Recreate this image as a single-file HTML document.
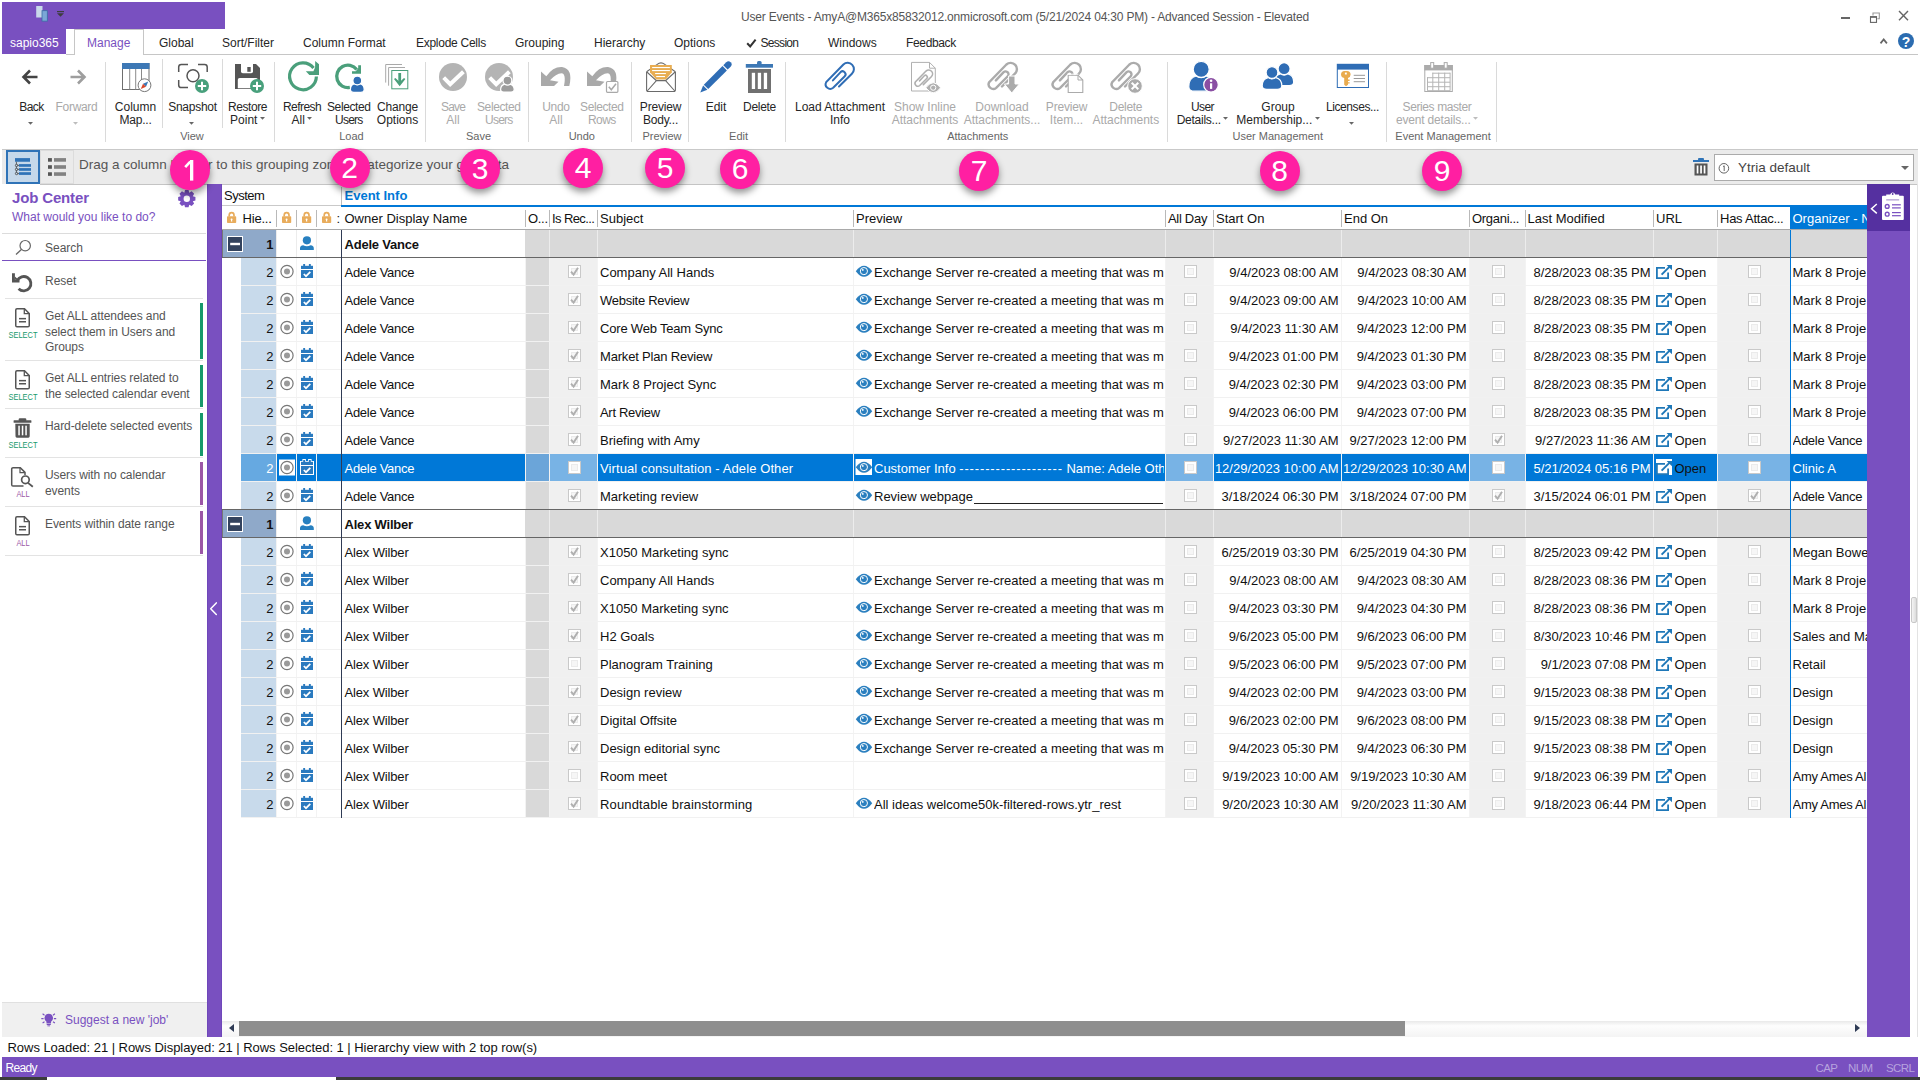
<!DOCTYPE html><html><head><meta charset="utf-8"><title>User Events</title><style>
*{margin:0;padding:0;box-sizing:border-box}
html,body{width:1920px;height:1080px;overflow:hidden;background:#fff}
body{font-family:"Liberation Sans",sans-serif;font-size:12px;color:#262626;position:relative}
.a{position:absolute}
.t{position:absolute;white-space:nowrap;line-height:16px;height:16px}
.c{text-align:center}
.r{text-align:right}
svg{position:absolute;overflow:visible}
.rb{font-size:12px;color:#262626}
.rd{font-size:12px;color:#a9a9a9}
.gl{font-size:11px;color:#666}
.vs{position:absolute;width:1px;background:#dadada}
.g{font-size:13px;color:#111}
.hd{font-size:13px;color:#111}
.cb{position:absolute;width:13px;height:13px;border:1px solid #c9c9c9;background:#fff}
.cb:after{content:"";position:absolute;left:2px;top:2px;width:5px;height:5px;border:1px solid #ebebeb;background:#f6f6f6}
.pc{position:absolute;width:40px;height:40px;border-radius:50%;background:#ff1fa2;color:#fff;font-size:30px;line-height:40px;text-align:center;box-shadow:0 4px 7px rgba(0,0,0,.42)}
.jt{font-size:12px;letter-spacing:-.08px;color:#555;line-height:15.5px;position:absolute;white-space:nowrap}
</style></head><body>
<div class="a" style="left:2px;top:2px;width:223px;height:27px;background:#7950c0;"></div>
<div class="a" style="left:2px;top:29px;width:64px;height:25px;background:#7950c0;"></div>
<div class="t c " style="left:625.0px;width:800px;top:9.0px;color:#555;font-size:12px;letter-spacing:-.187px">User Events - AmyA@M365x85832012.onmicrosoft.com (5/21/2024 04:30 PM) - Advanced Session - Elevated</div>
<div class="t" style="left:1898px;top:33.5px;width:16px;text-align:center;color:#fff;font-weight:bold;font-size:14px;z-index:5">?</div>
<div class="a" style="left:66px;top:54px;width:1852px;height:1px;background:#c6c6c6;"></div>
<div class="a" style="left:74px;top:29px;width:70px;height:26px;border:1px solid #c6c6c6;border-bottom:none;background:#fff"></div>
<div class="t " style="left:10px;top:35.0px;color:#fff;font-size:12px">sapio365</div>
<div class="t " style="left:87px;top:35.0px;color:#7950c0;font-size:12px;letter-spacing:0px">Manage</div>
<div class="t " style="left:159px;top:35.0px;color:#262626;font-size:12px;letter-spacing:0px">Global</div>
<div class="t " style="left:222px;top:35.0px;color:#262626;font-size:12px;letter-spacing:0px">Sort/Filter</div>
<div class="t " style="left:303px;top:35.0px;color:#262626;font-size:12px;letter-spacing:0px">Column Format</div>
<div class="t " style="left:416px;top:35.0px;color:#262626;font-size:12px;letter-spacing:-0.27px">Explode Cells</div>
<div class="t " style="left:515px;top:35.0px;color:#262626;font-size:12px;letter-spacing:0px">Grouping</div>
<div class="t " style="left:594px;top:35.0px;color:#262626;font-size:12px;letter-spacing:0px">Hierarchy</div>
<div class="t " style="left:674px;top:35.0px;color:#262626;font-size:12px;letter-spacing:0px">Options</div>
<div class="t " style="left:760.5px;top:35.0px;color:#262626;font-size:12px;letter-spacing:-0.7px">Session</div>
<div class="t " style="left:828px;top:35.0px;color:#262626;font-size:12px;letter-spacing:0px">Windows</div>
<div class="t " style="left:906px;top:35.0px;color:#262626;font-size:12px;letter-spacing:-0.35px">Feedback</div>
<div class="vs" style="left:105px;top:62px;height:80px"></div>
<div class="vs" style="left:274px;top:62px;height:80px"></div>
<div class="vs" style="left:425px;top:62px;height:80px"></div>
<div class="vs" style="left:528px;top:62px;height:80px"></div>
<div class="vs" style="left:631px;top:62px;height:80px"></div>
<div class="vs" style="left:688px;top:62px;height:80px"></div>
<div class="vs" style="left:785px;top:62px;height:80px"></div>
<div class="vs" style="left:1167px;top:62px;height:80px"></div>
<div class="vs" style="left:1386px;top:62px;height:80px"></div>
<div class="vs" style="left:1496px;top:62px;height:80px"></div>
<div class="vs" style="left:162px;top:59px;height:69px"></div>
<div class="vs" style="left:222px;top:59px;height:69px"></div>
<div class="a" style="left:2px;top:149px;width:1916px;height:1px;background:#c9c9c9;"></div>
<div class="t c rb" style="left:-68.5px;width:200px;top:98.5px;"><span style="letter-spacing:-0.55px">Back</span></div>
<svg style="left:27.7px;top:122px" width="5" height="3" viewBox="0 0 5 3"><path d="M0 0H5L2.5 2.8Z" fill="#666"/></svg>
<div class="t c rd" style="left:-23.5px;width:200px;top:98.5px;"><span style="letter-spacing:-0.3px">Forward</span></div>
<svg style="left:72.7px;top:122px" width="5" height="3" viewBox="0 0 5 3"><path d="M0 0H5L2.5 2.8Z" fill="#bdbdbd"/></svg>
<div class="t c rb" style="left:35.5px;width:200px;top:98.5px;">Column</div>
<div class="t c rb" style="left:35.5px;width:200px;top:111.5px;"><span style="letter-spacing:-0.2px">Map...</span></div>
<div class="t c rb" style="left:92.5px;width:200px;top:98.5px;"><span style="letter-spacing:-0.25px">Snapshot</span></div>
<svg style="left:188.7px;top:122px" width="5" height="3" viewBox="0 0 5 3"><path d="M0 0H5L2.5 2.8Z" fill="#666"/></svg>
<div class="t c rb" style="left:147.5px;width:200px;top:98.5px;"><span style="letter-spacing:-0.4px">Restore</span></div>
<div class="t c rb" style="left:147.5px;width:200px;top:111.5px;">Point<svg width="5" height="3" viewBox="0 0 5 3" style="position:static;display:inline-block;margin-left:2.5px;vertical-align:3.5px"><path d="M0 0H5L2.5 2.8Z" fill="#666"/></svg></div>
<div class="t c rb" style="left:202.0px;width:200px;top:98.5px;"><span style="letter-spacing:-0.55px">Refresh</span></div>
<div class="t c rb" style="left:202.0px;width:200px;top:111.5px;">All<svg width="5" height="3" viewBox="0 0 5 3" style="position:static;display:inline-block;margin-left:2.5px;vertical-align:3.5px"><path d="M0 0H5L2.5 2.8Z" fill="#666"/></svg></div>
<div class="t c rb" style="left:248.75px;width:200px;top:98.5px;"><span style="letter-spacing:-0.4px">Selected</span></div>
<div class="t c rb" style="left:248.75px;width:200px;top:111.5px;"><span style="letter-spacing:-0.8px">Users</span></div>
<div class="t c rb" style="left:297.5px;width:200px;top:98.5px;"><span style="letter-spacing:-0.2px">Change</span></div>
<div class="t c rb" style="left:297.5px;width:200px;top:111.5px;">Options</div>
<div class="t c rd" style="left:353.0px;width:200px;top:98.5px;"><span style="letter-spacing:-0.85px">Save</span></div>
<div class="t c rd" style="left:353.0px;width:200px;top:111.5px;">All</div>
<div class="t c rd" style="left:398.75px;width:200px;top:98.5px;"><span style="letter-spacing:-0.4px">Selected</span></div>
<div class="t c rd" style="left:398.75px;width:200px;top:111.5px;"><span style="letter-spacing:-0.8px">Users</span></div>
<div class="t c rd" style="left:456.0px;width:200px;top:98.5px;"><span style="letter-spacing:-0.3px">Undo</span></div>
<div class="t c rd" style="left:456.0px;width:200px;top:111.5px;">All</div>
<div class="t c rd" style="left:501.79999999999995px;width:200px;top:98.5px;"><span style="letter-spacing:-0.4px">Selected</span></div>
<div class="t c rd" style="left:501.79999999999995px;width:200px;top:111.5px;"><span style="letter-spacing:-0.65px">Rows</span></div>
<div class="t c rb" style="left:560.5px;width:200px;top:98.5px;"><span style="letter-spacing:-0.2px">Preview</span></div>
<div class="t c rb" style="left:560.5px;width:200px;top:111.5px;"><span style="letter-spacing:-0.2px">Body...</span></div>
<div class="t c rb" style="left:616.0px;width:200px;top:98.5px;">Edit</div>
<div class="t c rb" style="left:659.5px;width:200px;top:98.5px;"><span style="letter-spacing:-0.3px">Delete</span></div>
<div class="t c rb" style="left:740.0px;width:200px;top:98.5px;">Load Attachment</div>
<div class="t c rb" style="left:740.0px;width:200px;top:111.5px;">Info</div>
<div class="t c rd" style="left:825.0px;width:200px;top:98.5px;">Show Inline</div>
<div class="t c rd" style="left:825.0px;width:200px;top:111.5px;">Attachments</div>
<div class="t c rd" style="left:902.0px;width:200px;top:98.5px;">Download</div>
<div class="t c rd" style="left:902.0px;width:200px;top:111.5px;">Attachments...</div>
<div class="t c rd" style="left:966.5px;width:200px;top:98.5px;"><span style="letter-spacing:-0.2px">Preview</span></div>
<div class="t c rd" style="left:966.5px;width:200px;top:111.5px;">Item...</div>
<div class="t c rd" style="left:1025.8px;width:200px;top:98.5px;"><span style="letter-spacing:-0.3px">Delete</span></div>
<div class="t c rd" style="left:1025.8px;width:200px;top:111.5px;">Attachments</div>
<div class="t c rb" style="left:1102.5px;width:200px;top:98.5px;"><span style="letter-spacing:-0.6px">User</span></div>
<div class="t c rb" style="left:1102.5px;width:200px;top:111.5px;"><span style="letter-spacing:-0.25px">Details...</span><svg width="5" height="3" viewBox="0 0 5 3" style="position:static;display:inline-block;margin-left:2.5px;vertical-align:3.5px"><path d="M0 0H5L2.5 2.8Z" fill="#666"/></svg></div>
<div class="t c rb" style="left:1178.0px;width:200px;top:98.5px;">Group</div>
<div class="t c rb" style="left:1178.0px;width:200px;top:111.5px;">Membership...<svg width="5" height="3" viewBox="0 0 5 3" style="position:static;display:inline-block;margin-left:2.5px;vertical-align:3.5px"><path d="M0 0H5L2.5 2.8Z" fill="#666"/></svg></div>
<div class="t c rb" style="left:1252.4px;width:200px;top:98.5px;"><span style="letter-spacing:-0.4px">Licenses...</span></div>
<svg style="left:1348.6000000000001px;top:122px" width="5" height="3" viewBox="0 0 5 3"><path d="M0 0H5L2.5 2.8Z" fill="#666"/></svg>
<div class="t c rd" style="left:1337.0px;width:200px;top:98.5px;"><span style="letter-spacing:-0.4px">Series master</span></div>
<div class="t c rd" style="left:1337.0px;width:200px;top:111.5px;"><span style="letter-spacing:-0.17px">event details...</span><svg width="5" height="3" viewBox="0 0 5 3" style="position:static;display:inline-block;margin-left:2.5px;vertical-align:3.5px"><path d="M0 0H5L2.5 2.8Z" fill="#bdbdbd"/></svg></div>
<div class="t c gl" style="left:92.0px;width:200px;top:128.0px;">View</div>
<div class="t c gl" style="left:251.39999999999998px;width:200px;top:128.0px;">Load</div>
<div class="t c gl" style="left:378.5px;width:200px;top:128.0px;">Save</div>
<div class="t c gl" style="left:481.79999999999995px;width:200px;top:128.0px;">Undo</div>
<div class="t c gl" style="left:562.0px;width:200px;top:128.0px;">Preview</div>
<div class="t c gl" style="left:638.6px;width:200px;top:128.0px;">Edit</div>
<div class="t c gl" style="left:877.75px;width:200px;top:128.0px;">Attachments</div>
<div class="t c gl" style="left:1177.75px;width:200px;top:128.0px;">User Management</div>
<div class="t c gl" style="left:1343.0px;width:200px;top:128.0px;">Event Management</div>
<div class="a" style="left:2px;top:150px;width:1916px;height:34px;background:#ebebeb;"></div>
<div class="a" style="left:40px;top:184px;width:1878px;height:1px;background:#c4c4c4;"></div>
<div class="a" style="left:6px;top:150px;width:34px;height:34px;border:2px solid #2f73b7;background:#c5d8ea"></div>
<div class="a" style="left:40px;top:150px;width:34px;height:34px;border:1px solid #dcdcdc"></div>
<div class="t " style="left:79px;top:156.5px;color:#555;font-size:13.5px">Drag a column header to this grouping zone to categorize your grid data</div>
<div class="a" style="left:1714px;top:154px;width:200px;height:27px;border:1px solid #ababab;background:#fff"></div>
<div class="t " style="left:1738px;top:160.0px;color:#444;font-size:13.5px">Ytria default</div>
<div class="a" style="left:1901px;top:166px;width:0;height:0;border-left:4.5px solid transparent;border-right:4.5px solid transparent;border-top:4.5px solid #666"></div>
<div class="t " style="left:12px;top:190.1px;color:#7950c0;font-size:15px;font-weight:bold;letter-spacing:-.15px">Job Center</div>
<div class="t " style="left:12px;top:209.0px;color:#7950c0;font-size:12px">What would you like to do?</div>
<div class="a" style="left:2px;top:233px;width:204px;height:1px;background:#dcdcdc;"></div>
<div class="t " style="left:45px;top:240.0px;color:#555;font-size:12px">Search</div>
<div class="a" style="left:2px;top:260px;width:204px;height:1px;background:#7950c0;"></div>
<div class="t " style="left:45px;top:273.0px;color:#555;font-size:12px">Reset</div>
<div class="a" style="left:5px;top:298px;width:198px;height:1px;background:#e3e3e3;"></div>
<div class="a" style="left:5px;top:360px;width:198px;height:1px;background:#e3e3e3;"></div>
<div class="a" style="left:200px;top:303px;width:3px;height:56px;background:#17996b;"></div>
<div class="jt" style="left:45px;top:309.45px">Get ALL attendees and</div>
<div class="jt" style="left:45px;top:324.95px">select them in Users and</div>
<div class="jt" style="left:45px;top:340.45px">Groups</div>
<div class="t c " style="left:-7.5px;width:60px;top:326.9px;color:#17996b;font-size:9.5px;transform:scaleX(.78)">SELECT</div>
<div class="a" style="left:5px;top:408px;width:198px;height:1px;background:#e3e3e3;"></div>
<div class="a" style="left:200px;top:365px;width:3px;height:42px;background:#17996b;"></div>
<div class="jt" style="left:45px;top:371.45px">Get ALL entries related to</div>
<div class="jt" style="left:45px;top:386.95px">the selected calendar event</div>
<div class="t c " style="left:-7.5px;width:60px;top:388.9px;color:#17996b;font-size:9.5px;transform:scaleX(.78)">SELECT</div>
<div class="a" style="left:5px;top:457px;width:198px;height:1px;background:#e3e3e3;"></div>
<div class="a" style="left:200px;top:413px;width:3px;height:43px;background:#17996b;"></div>
<div class="jt" style="left:45px;top:419.45px">Hard-delete selected events</div>
<div class="t c " style="left:-7.5px;width:60px;top:436.9px;color:#17996b;font-size:9.5px;transform:scaleX(.78)">SELECT</div>
<div class="a" style="left:5px;top:506px;width:198px;height:1px;background:#e3e3e3;"></div>
<div class="a" style="left:200px;top:462px;width:3px;height:43px;background:#9b57a6;"></div>
<div class="jt" style="left:45px;top:468.45px">Users with no calendar</div>
<div class="jt" style="left:45px;top:483.95px">events</div>
<div class="t c " style="left:-7.5px;width:60px;top:485.9px;color:#9b57a6;font-size:9.5px;transform:scaleX(.78)">ALL</div>
<div class="a" style="left:5px;top:555px;width:198px;height:1px;background:#e3e3e3;"></div>
<div class="a" style="left:200px;top:511px;width:3px;height:43px;background:#9b57a6;"></div>
<div class="jt" style="left:45px;top:517.45px">Events within date range</div>
<div class="t c " style="left:-7.5px;width:60px;top:534.9px;color:#9b57a6;font-size:9.5px;transform:scaleX(.78)">ALL</div>
<div class="a" style="left:2px;top:1003px;width:205px;height:34px;background:#f0f0f0;"></div>
<div class="a" style="left:2px;top:1002px;width:205px;height:1px;background:#e0e0e0;"></div>
<div class="t " style="left:65px;top:1012.0px;color:#7950c0;font-size:12px">Suggest a new 'job'</div>
<div class="a" style="left:207px;top:184px;width:15px;height:853px;background:#7950c0;"></div>
<div class="a" style="left:207px;top:184px;width:1px;height:853px;background:#6f47ba;"></div>
<div class="a" style="left:221px;top:184px;width:1px;height:853px;background:#6f47ba;"></div>
<div class="t hd" style="left:224px;top:187.5px;letter-spacing:-.5px">System</div>
<div class="a" style="left:222px;top:205px;width:119px;height:1px;background:#c9c9c9;"></div>
<div class="a" style="left:341px;top:187px;width:1px;height:18px;background:#bdbdbd;"></div>
<div class="t " style="left:344.5px;top:187.5px;color:#0078d7;font-size:13px;font-weight:bold">Event Info</div>
<div class="a" style="left:341px;top:205px;width:1526px;height:2px;background:#0078d7;"></div>
<div class="a" style="left:222px;top:229px;width:1645px;height:1px;background:#a9a9a9;"></div>
<div class="a" style="left:1790px;top:207px;width:77px;height:22px;background:#0078d7;"></div>
<div class="a" style="left:276px;top:210px;width:1px;height:17px;background:#b9b9b9;"></div>
<div class="a" style="left:296px;top:210px;width:1px;height:17px;background:#b9b9b9;"></div>
<div class="a" style="left:316px;top:210px;width:1px;height:17px;background:#b9b9b9;"></div>
<div class="a" style="left:525px;top:210px;width:1px;height:17px;background:#b9b9b9;"></div>
<div class="a" style="left:549px;top:210px;width:1px;height:17px;background:#b9b9b9;"></div>
<div class="a" style="left:597px;top:210px;width:1px;height:17px;background:#b9b9b9;"></div>
<div class="a" style="left:853px;top:210px;width:1px;height:17px;background:#b9b9b9;"></div>
<div class="a" style="left:1165px;top:210px;width:1px;height:17px;background:#b9b9b9;"></div>
<div class="a" style="left:1213px;top:210px;width:1px;height:17px;background:#b9b9b9;"></div>
<div class="a" style="left:1341px;top:210px;width:1px;height:17px;background:#b9b9b9;"></div>
<div class="a" style="left:1469px;top:210px;width:1px;height:17px;background:#b9b9b9;"></div>
<div class="a" style="left:1525px;top:210px;width:1px;height:17px;background:#b9b9b9;"></div>
<div class="a" style="left:1653px;top:210px;width:1px;height:17px;background:#b9b9b9;"></div>
<div class="a" style="left:1717px;top:210px;width:1px;height:17px;background:#b9b9b9;"></div>
<div class="t hd" style="left:242.5px;top:210.5px;letter-spacing:-0.2px">Hie...</div>
<div class="t hd" style="left:344.5px;top:210.5px;letter-spacing:0px">Owner Display Name</div>
<div class="t hd" style="left:528px;top:210.5px;letter-spacing:-0.3px">O...</div>
<div class="t hd" style="left:552px;top:210.5px;letter-spacing:-0.6px">Is Rec...</div>
<div class="t hd" style="left:600px;top:210.5px;letter-spacing:0px">Subject</div>
<div class="t hd" style="left:856px;top:210.5px;letter-spacing:0px">Preview</div>
<div class="t hd" style="left:1168px;top:210.5px;letter-spacing:-0.3px">All Day</div>
<div class="t hd" style="left:1216px;top:210.5px;letter-spacing:0px">Start On</div>
<div class="t hd" style="left:1344px;top:210.5px;letter-spacing:0px">End On</div>
<div class="t hd" style="left:1472px;top:210.5px;letter-spacing:-0.3px">Organi...</div>
<div class="t hd" style="left:1527.5px;top:210.5px;letter-spacing:0px">Last Modified</div>
<div class="t hd" style="left:1656px;top:210.5px;letter-spacing:0px">URL</div>
<div class="t hd" style="left:1720px;top:210.5px;letter-spacing:-0.25px">Has Attac...</div>
<div class="t hd" style="left:1792.5px;top:210.5px;color:#fff">Organizer - N</div>
<div class="t hd" style="left:336.5px;top:210.5px;">:</div>
<div class="a" style="left:222px;top:230px;width:54px;height:27px;background:#8fa9c9;"></div>
<div class="a" style="left:222px;top:230px;width:1px;height:27px;background:#777;"></div>
<div class="a" style="left:525px;top:230px;width:1342px;height:27px;background:#d9d9d9;"></div>
<div class="a" style="left:549px;top:230px;width:1px;height:27px;background:#ececec;"></div>
<div class="a" style="left:597px;top:230px;width:1px;height:27px;background:#ececec;"></div>
<div class="a" style="left:853px;top:230px;width:1px;height:27px;background:#ececec;"></div>
<div class="a" style="left:1165px;top:230px;width:1px;height:27px;background:#ececec;"></div>
<div class="a" style="left:1213px;top:230px;width:1px;height:27px;background:#ececec;"></div>
<div class="a" style="left:1341px;top:230px;width:1px;height:27px;background:#ececec;"></div>
<div class="a" style="left:1469px;top:230px;width:1px;height:27px;background:#ececec;"></div>
<div class="a" style="left:1525px;top:230px;width:1px;height:27px;background:#ececec;"></div>
<div class="a" style="left:1653px;top:230px;width:1px;height:27px;background:#ececec;"></div>
<div class="a" style="left:1717px;top:230px;width:1px;height:27px;background:#ececec;"></div>
<div class="a" style="left:222px;top:257px;width:1645px;height:1px;background:#666;"></div>
<div class="a" style="left:276px;top:230px;width:1px;height:27px;background:#ececec;"></div>
<div class="a" style="left:296px;top:230px;width:1px;height:27px;background:#ececec;"></div>
<div class="a" style="left:316px;top:230px;width:1px;height:27px;background:#ececec;"></div>
<div class="t r g" style="left:243.5px;width:30px;top:236.7px;font-weight:bold">1</div>
<div class="t g" style="left:344.5px;top:236.7px;font-weight:bold;letter-spacing:-.2px">Adele Vance</div>
<div class="a" style="left:241px;top:258px;width:35px;height:27px;background:#c8daeb;"></div>
<div class="a" style="left:525px;top:258px;width:24px;height:27px;background:#d9d9d9;"></div>
<div class="a" style="left:549px;top:258px;width:48px;height:27px;background:#f0f0f0;"></div>
<div class="a" style="left:1165px;top:258px;width:48px;height:27px;background:#f0f0f0;"></div>
<div class="a" style="left:1469px;top:258px;width:56px;height:27px;background:#f0f0f0;"></div>
<div class="a" style="left:1717px;top:258px;width:73px;height:27px;background:#f0f0f0;"></div>
<div class="a" style="left:241px;top:285px;width:1626px;height:1px;background:#f1f1f1;"></div>
<div class="a" style="left:276px;top:258px;width:1px;height:27px;background:#f3f3f3;"></div>
<div class="a" style="left:296px;top:258px;width:1px;height:27px;background:#f3f3f3;"></div>
<div class="a" style="left:316px;top:258px;width:1px;height:27px;background:#f3f3f3;"></div>
<div class="a" style="left:525px;top:258px;width:1px;height:27px;background:#f3f3f3;"></div>
<div class="a" style="left:549px;top:258px;width:1px;height:27px;background:#f3f3f3;"></div>
<div class="a" style="left:597px;top:258px;width:1px;height:27px;background:#f3f3f3;"></div>
<div class="a" style="left:853px;top:258px;width:1px;height:27px;background:#f3f3f3;"></div>
<div class="a" style="left:1165px;top:258px;width:1px;height:27px;background:#f3f3f3;"></div>
<div class="a" style="left:1213px;top:258px;width:1px;height:27px;background:#f3f3f3;"></div>
<div class="a" style="left:1341px;top:258px;width:1px;height:27px;background:#f3f3f3;"></div>
<div class="a" style="left:1469px;top:258px;width:1px;height:27px;background:#f3f3f3;"></div>
<div class="a" style="left:1525px;top:258px;width:1px;height:27px;background:#f3f3f3;"></div>
<div class="a" style="left:1653px;top:258px;width:1px;height:27px;background:#f3f3f3;"></div>
<div class="a" style="left:1717px;top:258px;width:1px;height:27px;background:#f3f3f3;"></div>
<div class="t r g" style="left:243.5px;width:30px;top:265.0px;color:#111">2</div>
<div class="t g" style="left:344.5px;top:265.0px;color:#111;letter-spacing:-0.28px">Adele Vance</div>
<div class="cb" style="left:568.0px;top:265px"></div>
<svg style="left:568.0px;top:265px" width="13" height="13" viewBox="0 0 13 13"><path d="M3 6.6 L5.6 9.6 L10 2.8" fill="none" stroke="#b0b0b0" stroke-width="1.9"/></svg>
<div class="t g" style="left:600px;top:265.0px;color:#111;letter-spacing:0px">Company All Hands</div>
<div class="t g" style="left:874px;top:265px;width:290px;overflow:hidden;color:#111">Exchange Server re-created a meeting that was m</div>
<div class="cb" style="left:1184.0px;top:265px"></div>
<div class="t r g" style="left:1138.5px;width:200px;top:265.0px;color:#111">9/4/2023 08:00 AM</div>
<div class="t r g" style="left:1266.5px;width:200px;top:265.0px;color:#111">9/4/2023 08:30 AM</div>
<div class="cb" style="left:1491.5px;top:265px"></div>
<div class="t r g" style="left:1450.5px;width:200px;top:265.0px;color:#111">8/28/2023 08:35 PM</div>
<div class="t g" style="left:1674.5px;top:265.0px;">Open</div>
<div class="cb" style="left:1747.5px;top:265px"></div>
<div class="t g" style="left:1792.5px;top:265px;width:74px;overflow:hidden;color:#111;letter-spacing:0px">Mark 8 Proje</div>
<div class="a" style="left:241px;top:286px;width:35px;height:27px;background:#c8daeb;"></div>
<div class="a" style="left:525px;top:286px;width:24px;height:27px;background:#d9d9d9;"></div>
<div class="a" style="left:549px;top:286px;width:48px;height:27px;background:#f0f0f0;"></div>
<div class="a" style="left:1165px;top:286px;width:48px;height:27px;background:#f0f0f0;"></div>
<div class="a" style="left:1469px;top:286px;width:56px;height:27px;background:#f0f0f0;"></div>
<div class="a" style="left:1717px;top:286px;width:73px;height:27px;background:#f0f0f0;"></div>
<div class="a" style="left:241px;top:313px;width:1626px;height:1px;background:#f1f1f1;"></div>
<div class="a" style="left:276px;top:286px;width:1px;height:27px;background:#f3f3f3;"></div>
<div class="a" style="left:296px;top:286px;width:1px;height:27px;background:#f3f3f3;"></div>
<div class="a" style="left:316px;top:286px;width:1px;height:27px;background:#f3f3f3;"></div>
<div class="a" style="left:525px;top:286px;width:1px;height:27px;background:#f3f3f3;"></div>
<div class="a" style="left:549px;top:286px;width:1px;height:27px;background:#f3f3f3;"></div>
<div class="a" style="left:597px;top:286px;width:1px;height:27px;background:#f3f3f3;"></div>
<div class="a" style="left:853px;top:286px;width:1px;height:27px;background:#f3f3f3;"></div>
<div class="a" style="left:1165px;top:286px;width:1px;height:27px;background:#f3f3f3;"></div>
<div class="a" style="left:1213px;top:286px;width:1px;height:27px;background:#f3f3f3;"></div>
<div class="a" style="left:1341px;top:286px;width:1px;height:27px;background:#f3f3f3;"></div>
<div class="a" style="left:1469px;top:286px;width:1px;height:27px;background:#f3f3f3;"></div>
<div class="a" style="left:1525px;top:286px;width:1px;height:27px;background:#f3f3f3;"></div>
<div class="a" style="left:1653px;top:286px;width:1px;height:27px;background:#f3f3f3;"></div>
<div class="a" style="left:1717px;top:286px;width:1px;height:27px;background:#f3f3f3;"></div>
<div class="t r g" style="left:243.5px;width:30px;top:293.0px;color:#111">2</div>
<div class="t g" style="left:344.5px;top:293.0px;color:#111;letter-spacing:-0.28px">Adele Vance</div>
<div class="cb" style="left:568.0px;top:293px"></div>
<svg style="left:568.0px;top:293px" width="13" height="13" viewBox="0 0 13 13"><path d="M3 6.6 L5.6 9.6 L10 2.8" fill="none" stroke="#b0b0b0" stroke-width="1.9"/></svg>
<div class="t g" style="left:600px;top:293.0px;color:#111;letter-spacing:-0.27px">Website Review</div>
<div class="t g" style="left:874px;top:293px;width:290px;overflow:hidden;color:#111">Exchange Server re-created a meeting that was m</div>
<div class="cb" style="left:1184.0px;top:293px"></div>
<div class="t r g" style="left:1138.5px;width:200px;top:293.0px;color:#111">9/4/2023 09:00 AM</div>
<div class="t r g" style="left:1266.5px;width:200px;top:293.0px;color:#111">9/4/2023 10:00 AM</div>
<div class="cb" style="left:1491.5px;top:293px"></div>
<div class="t r g" style="left:1450.5px;width:200px;top:293.0px;color:#111">8/28/2023 08:35 PM</div>
<div class="t g" style="left:1674.5px;top:293.0px;">Open</div>
<div class="cb" style="left:1747.5px;top:293px"></div>
<div class="t g" style="left:1792.5px;top:293px;width:74px;overflow:hidden;color:#111;letter-spacing:0px">Mark 8 Proje</div>
<div class="a" style="left:241px;top:314px;width:35px;height:27px;background:#c8daeb;"></div>
<div class="a" style="left:525px;top:314px;width:24px;height:27px;background:#d9d9d9;"></div>
<div class="a" style="left:549px;top:314px;width:48px;height:27px;background:#f0f0f0;"></div>
<div class="a" style="left:1165px;top:314px;width:48px;height:27px;background:#f0f0f0;"></div>
<div class="a" style="left:1469px;top:314px;width:56px;height:27px;background:#f0f0f0;"></div>
<div class="a" style="left:1717px;top:314px;width:73px;height:27px;background:#f0f0f0;"></div>
<div class="a" style="left:241px;top:341px;width:1626px;height:1px;background:#f1f1f1;"></div>
<div class="a" style="left:276px;top:314px;width:1px;height:27px;background:#f3f3f3;"></div>
<div class="a" style="left:296px;top:314px;width:1px;height:27px;background:#f3f3f3;"></div>
<div class="a" style="left:316px;top:314px;width:1px;height:27px;background:#f3f3f3;"></div>
<div class="a" style="left:525px;top:314px;width:1px;height:27px;background:#f3f3f3;"></div>
<div class="a" style="left:549px;top:314px;width:1px;height:27px;background:#f3f3f3;"></div>
<div class="a" style="left:597px;top:314px;width:1px;height:27px;background:#f3f3f3;"></div>
<div class="a" style="left:853px;top:314px;width:1px;height:27px;background:#f3f3f3;"></div>
<div class="a" style="left:1165px;top:314px;width:1px;height:27px;background:#f3f3f3;"></div>
<div class="a" style="left:1213px;top:314px;width:1px;height:27px;background:#f3f3f3;"></div>
<div class="a" style="left:1341px;top:314px;width:1px;height:27px;background:#f3f3f3;"></div>
<div class="a" style="left:1469px;top:314px;width:1px;height:27px;background:#f3f3f3;"></div>
<div class="a" style="left:1525px;top:314px;width:1px;height:27px;background:#f3f3f3;"></div>
<div class="a" style="left:1653px;top:314px;width:1px;height:27px;background:#f3f3f3;"></div>
<div class="a" style="left:1717px;top:314px;width:1px;height:27px;background:#f3f3f3;"></div>
<div class="t r g" style="left:243.5px;width:30px;top:321.0px;color:#111">2</div>
<div class="t g" style="left:344.5px;top:321.0px;color:#111;letter-spacing:-0.28px">Adele Vance</div>
<div class="cb" style="left:568.0px;top:321px"></div>
<svg style="left:568.0px;top:321px" width="13" height="13" viewBox="0 0 13 13"><path d="M3 6.6 L5.6 9.6 L10 2.8" fill="none" stroke="#b0b0b0" stroke-width="1.9"/></svg>
<div class="t g" style="left:600px;top:321.0px;color:#111;letter-spacing:-0.19px">Core Web Team Sync</div>
<div class="t g" style="left:874px;top:321px;width:290px;overflow:hidden;color:#111">Exchange Server re-created a meeting that was m</div>
<div class="cb" style="left:1184.0px;top:321px"></div>
<div class="t r g" style="left:1138.5px;width:200px;top:321.0px;color:#111">9/4/2023 11:30 AM</div>
<div class="t r g" style="left:1266.5px;width:200px;top:321.0px;color:#111">9/4/2023 12:00 PM</div>
<div class="cb" style="left:1491.5px;top:321px"></div>
<div class="t r g" style="left:1450.5px;width:200px;top:321.0px;color:#111">8/28/2023 08:35 PM</div>
<div class="t g" style="left:1674.5px;top:321.0px;">Open</div>
<div class="cb" style="left:1747.5px;top:321px"></div>
<div class="t g" style="left:1792.5px;top:321px;width:74px;overflow:hidden;color:#111;letter-spacing:0px">Mark 8 Proje</div>
<div class="a" style="left:241px;top:342px;width:35px;height:27px;background:#c8daeb;"></div>
<div class="a" style="left:525px;top:342px;width:24px;height:27px;background:#d9d9d9;"></div>
<div class="a" style="left:549px;top:342px;width:48px;height:27px;background:#f0f0f0;"></div>
<div class="a" style="left:1165px;top:342px;width:48px;height:27px;background:#f0f0f0;"></div>
<div class="a" style="left:1469px;top:342px;width:56px;height:27px;background:#f0f0f0;"></div>
<div class="a" style="left:1717px;top:342px;width:73px;height:27px;background:#f0f0f0;"></div>
<div class="a" style="left:241px;top:369px;width:1626px;height:1px;background:#f1f1f1;"></div>
<div class="a" style="left:276px;top:342px;width:1px;height:27px;background:#f3f3f3;"></div>
<div class="a" style="left:296px;top:342px;width:1px;height:27px;background:#f3f3f3;"></div>
<div class="a" style="left:316px;top:342px;width:1px;height:27px;background:#f3f3f3;"></div>
<div class="a" style="left:525px;top:342px;width:1px;height:27px;background:#f3f3f3;"></div>
<div class="a" style="left:549px;top:342px;width:1px;height:27px;background:#f3f3f3;"></div>
<div class="a" style="left:597px;top:342px;width:1px;height:27px;background:#f3f3f3;"></div>
<div class="a" style="left:853px;top:342px;width:1px;height:27px;background:#f3f3f3;"></div>
<div class="a" style="left:1165px;top:342px;width:1px;height:27px;background:#f3f3f3;"></div>
<div class="a" style="left:1213px;top:342px;width:1px;height:27px;background:#f3f3f3;"></div>
<div class="a" style="left:1341px;top:342px;width:1px;height:27px;background:#f3f3f3;"></div>
<div class="a" style="left:1469px;top:342px;width:1px;height:27px;background:#f3f3f3;"></div>
<div class="a" style="left:1525px;top:342px;width:1px;height:27px;background:#f3f3f3;"></div>
<div class="a" style="left:1653px;top:342px;width:1px;height:27px;background:#f3f3f3;"></div>
<div class="a" style="left:1717px;top:342px;width:1px;height:27px;background:#f3f3f3;"></div>
<div class="t r g" style="left:243.5px;width:30px;top:349.0px;color:#111">2</div>
<div class="t g" style="left:344.5px;top:349.0px;color:#111;letter-spacing:-0.28px">Adele Vance</div>
<div class="cb" style="left:568.0px;top:349px"></div>
<svg style="left:568.0px;top:349px" width="13" height="13" viewBox="0 0 13 13"><path d="M3 6.6 L5.6 9.6 L10 2.8" fill="none" stroke="#b0b0b0" stroke-width="1.9"/></svg>
<div class="t g" style="left:600px;top:349.0px;color:#111;letter-spacing:-0.19px">Market Plan Review</div>
<div class="t g" style="left:874px;top:349px;width:290px;overflow:hidden;color:#111">Exchange Server re-created a meeting that was m</div>
<div class="cb" style="left:1184.0px;top:349px"></div>
<div class="t r g" style="left:1138.5px;width:200px;top:349.0px;color:#111">9/4/2023 01:00 PM</div>
<div class="t r g" style="left:1266.5px;width:200px;top:349.0px;color:#111">9/4/2023 01:30 PM</div>
<div class="cb" style="left:1491.5px;top:349px"></div>
<div class="t r g" style="left:1450.5px;width:200px;top:349.0px;color:#111">8/28/2023 08:35 PM</div>
<div class="t g" style="left:1674.5px;top:349.0px;">Open</div>
<div class="cb" style="left:1747.5px;top:349px"></div>
<div class="t g" style="left:1792.5px;top:349px;width:74px;overflow:hidden;color:#111;letter-spacing:0px">Mark 8 Proje</div>
<div class="a" style="left:241px;top:370px;width:35px;height:27px;background:#c8daeb;"></div>
<div class="a" style="left:525px;top:370px;width:24px;height:27px;background:#d9d9d9;"></div>
<div class="a" style="left:549px;top:370px;width:48px;height:27px;background:#f0f0f0;"></div>
<div class="a" style="left:1165px;top:370px;width:48px;height:27px;background:#f0f0f0;"></div>
<div class="a" style="left:1469px;top:370px;width:56px;height:27px;background:#f0f0f0;"></div>
<div class="a" style="left:1717px;top:370px;width:73px;height:27px;background:#f0f0f0;"></div>
<div class="a" style="left:241px;top:397px;width:1626px;height:1px;background:#f1f1f1;"></div>
<div class="a" style="left:276px;top:370px;width:1px;height:27px;background:#f3f3f3;"></div>
<div class="a" style="left:296px;top:370px;width:1px;height:27px;background:#f3f3f3;"></div>
<div class="a" style="left:316px;top:370px;width:1px;height:27px;background:#f3f3f3;"></div>
<div class="a" style="left:525px;top:370px;width:1px;height:27px;background:#f3f3f3;"></div>
<div class="a" style="left:549px;top:370px;width:1px;height:27px;background:#f3f3f3;"></div>
<div class="a" style="left:597px;top:370px;width:1px;height:27px;background:#f3f3f3;"></div>
<div class="a" style="left:853px;top:370px;width:1px;height:27px;background:#f3f3f3;"></div>
<div class="a" style="left:1165px;top:370px;width:1px;height:27px;background:#f3f3f3;"></div>
<div class="a" style="left:1213px;top:370px;width:1px;height:27px;background:#f3f3f3;"></div>
<div class="a" style="left:1341px;top:370px;width:1px;height:27px;background:#f3f3f3;"></div>
<div class="a" style="left:1469px;top:370px;width:1px;height:27px;background:#f3f3f3;"></div>
<div class="a" style="left:1525px;top:370px;width:1px;height:27px;background:#f3f3f3;"></div>
<div class="a" style="left:1653px;top:370px;width:1px;height:27px;background:#f3f3f3;"></div>
<div class="a" style="left:1717px;top:370px;width:1px;height:27px;background:#f3f3f3;"></div>
<div class="t r g" style="left:243.5px;width:30px;top:377.0px;color:#111">2</div>
<div class="t g" style="left:344.5px;top:377.0px;color:#111;letter-spacing:-0.28px">Adele Vance</div>
<div class="cb" style="left:568.0px;top:377px"></div>
<svg style="left:568.0px;top:377px" width="13" height="13" viewBox="0 0 13 13"><path d="M3 6.6 L5.6 9.6 L10 2.8" fill="none" stroke="#b0b0b0" stroke-width="1.9"/></svg>
<div class="t g" style="left:600px;top:377.0px;color:#111;letter-spacing:0px">Mark 8 Project Sync</div>
<div class="t g" style="left:874px;top:377px;width:290px;overflow:hidden;color:#111">Exchange Server re-created a meeting that was m</div>
<div class="cb" style="left:1184.0px;top:377px"></div>
<div class="t r g" style="left:1138.5px;width:200px;top:377.0px;color:#111">9/4/2023 02:30 PM</div>
<div class="t r g" style="left:1266.5px;width:200px;top:377.0px;color:#111">9/4/2023 03:00 PM</div>
<div class="cb" style="left:1491.5px;top:377px"></div>
<div class="t r g" style="left:1450.5px;width:200px;top:377.0px;color:#111">8/28/2023 08:35 PM</div>
<div class="t g" style="left:1674.5px;top:377.0px;">Open</div>
<div class="cb" style="left:1747.5px;top:377px"></div>
<div class="t g" style="left:1792.5px;top:377px;width:74px;overflow:hidden;color:#111;letter-spacing:0px">Mark 8 Proje</div>
<div class="a" style="left:241px;top:398px;width:35px;height:27px;background:#c8daeb;"></div>
<div class="a" style="left:525px;top:398px;width:24px;height:27px;background:#d9d9d9;"></div>
<div class="a" style="left:549px;top:398px;width:48px;height:27px;background:#f0f0f0;"></div>
<div class="a" style="left:1165px;top:398px;width:48px;height:27px;background:#f0f0f0;"></div>
<div class="a" style="left:1469px;top:398px;width:56px;height:27px;background:#f0f0f0;"></div>
<div class="a" style="left:1717px;top:398px;width:73px;height:27px;background:#f0f0f0;"></div>
<div class="a" style="left:241px;top:425px;width:1626px;height:1px;background:#f1f1f1;"></div>
<div class="a" style="left:276px;top:398px;width:1px;height:27px;background:#f3f3f3;"></div>
<div class="a" style="left:296px;top:398px;width:1px;height:27px;background:#f3f3f3;"></div>
<div class="a" style="left:316px;top:398px;width:1px;height:27px;background:#f3f3f3;"></div>
<div class="a" style="left:525px;top:398px;width:1px;height:27px;background:#f3f3f3;"></div>
<div class="a" style="left:549px;top:398px;width:1px;height:27px;background:#f3f3f3;"></div>
<div class="a" style="left:597px;top:398px;width:1px;height:27px;background:#f3f3f3;"></div>
<div class="a" style="left:853px;top:398px;width:1px;height:27px;background:#f3f3f3;"></div>
<div class="a" style="left:1165px;top:398px;width:1px;height:27px;background:#f3f3f3;"></div>
<div class="a" style="left:1213px;top:398px;width:1px;height:27px;background:#f3f3f3;"></div>
<div class="a" style="left:1341px;top:398px;width:1px;height:27px;background:#f3f3f3;"></div>
<div class="a" style="left:1469px;top:398px;width:1px;height:27px;background:#f3f3f3;"></div>
<div class="a" style="left:1525px;top:398px;width:1px;height:27px;background:#f3f3f3;"></div>
<div class="a" style="left:1653px;top:398px;width:1px;height:27px;background:#f3f3f3;"></div>
<div class="a" style="left:1717px;top:398px;width:1px;height:27px;background:#f3f3f3;"></div>
<div class="t r g" style="left:243.5px;width:30px;top:405.0px;color:#111">2</div>
<div class="t g" style="left:344.5px;top:405.0px;color:#111;letter-spacing:-0.28px">Adele Vance</div>
<div class="cb" style="left:568.0px;top:405px"></div>
<svg style="left:568.0px;top:405px" width="13" height="13" viewBox="0 0 13 13"><path d="M3 6.6 L5.6 9.6 L10 2.8" fill="none" stroke="#b0b0b0" stroke-width="1.9"/></svg>
<div class="t g" style="left:600px;top:405.0px;color:#111;letter-spacing:-0.3px">Art Review</div>
<div class="t g" style="left:874px;top:405px;width:290px;overflow:hidden;color:#111">Exchange Server re-created a meeting that was m</div>
<div class="cb" style="left:1184.0px;top:405px"></div>
<div class="t r g" style="left:1138.5px;width:200px;top:405.0px;color:#111">9/4/2023 06:00 PM</div>
<div class="t r g" style="left:1266.5px;width:200px;top:405.0px;color:#111">9/4/2023 07:00 PM</div>
<div class="cb" style="left:1491.5px;top:405px"></div>
<div class="t r g" style="left:1450.5px;width:200px;top:405.0px;color:#111">8/28/2023 08:35 PM</div>
<div class="t g" style="left:1674.5px;top:405.0px;">Open</div>
<div class="cb" style="left:1747.5px;top:405px"></div>
<div class="t g" style="left:1792.5px;top:405px;width:74px;overflow:hidden;color:#111;letter-spacing:0px">Mark 8 Proje</div>
<div class="a" style="left:241px;top:426px;width:35px;height:27px;background:#c8daeb;"></div>
<div class="a" style="left:525px;top:426px;width:24px;height:27px;background:#d9d9d9;"></div>
<div class="a" style="left:549px;top:426px;width:48px;height:27px;background:#f0f0f0;"></div>
<div class="a" style="left:1165px;top:426px;width:48px;height:27px;background:#f0f0f0;"></div>
<div class="a" style="left:1469px;top:426px;width:56px;height:27px;background:#f0f0f0;"></div>
<div class="a" style="left:1717px;top:426px;width:73px;height:27px;background:#f0f0f0;"></div>
<div class="a" style="left:241px;top:453px;width:1626px;height:1px;background:#f1f1f1;"></div>
<div class="a" style="left:276px;top:426px;width:1px;height:27px;background:#f3f3f3;"></div>
<div class="a" style="left:296px;top:426px;width:1px;height:27px;background:#f3f3f3;"></div>
<div class="a" style="left:316px;top:426px;width:1px;height:27px;background:#f3f3f3;"></div>
<div class="a" style="left:525px;top:426px;width:1px;height:27px;background:#f3f3f3;"></div>
<div class="a" style="left:549px;top:426px;width:1px;height:27px;background:#f3f3f3;"></div>
<div class="a" style="left:597px;top:426px;width:1px;height:27px;background:#f3f3f3;"></div>
<div class="a" style="left:853px;top:426px;width:1px;height:27px;background:#f3f3f3;"></div>
<div class="a" style="left:1165px;top:426px;width:1px;height:27px;background:#f3f3f3;"></div>
<div class="a" style="left:1213px;top:426px;width:1px;height:27px;background:#f3f3f3;"></div>
<div class="a" style="left:1341px;top:426px;width:1px;height:27px;background:#f3f3f3;"></div>
<div class="a" style="left:1469px;top:426px;width:1px;height:27px;background:#f3f3f3;"></div>
<div class="a" style="left:1525px;top:426px;width:1px;height:27px;background:#f3f3f3;"></div>
<div class="a" style="left:1653px;top:426px;width:1px;height:27px;background:#f3f3f3;"></div>
<div class="a" style="left:1717px;top:426px;width:1px;height:27px;background:#f3f3f3;"></div>
<div class="t r g" style="left:243.5px;width:30px;top:433.0px;color:#111">2</div>
<div class="t g" style="left:344.5px;top:433.0px;color:#111;letter-spacing:-0.28px">Adele Vance</div>
<div class="cb" style="left:568.0px;top:433px"></div>
<svg style="left:568.0px;top:433px" width="13" height="13" viewBox="0 0 13 13"><path d="M3 6.6 L5.6 9.6 L10 2.8" fill="none" stroke="#b0b0b0" stroke-width="1.9"/></svg>
<div class="t g" style="left:600px;top:433.0px;color:#111;letter-spacing:0px">Briefing with Amy</div>
<div class="cb" style="left:1184.0px;top:433px"></div>
<div class="t r g" style="left:1138.5px;width:200px;top:433.0px;color:#111">9/27/2023 11:30 AM</div>
<div class="t r g" style="left:1266.5px;width:200px;top:433.0px;color:#111">9/27/2023 12:00 PM</div>
<div class="cb" style="left:1491.5px;top:433px"></div>
<svg style="left:1491.5px;top:433px" width="13" height="13" viewBox="0 0 13 13"><path d="M3 6.6 L5.6 9.6 L10 2.8" fill="none" stroke="#b0b0b0" stroke-width="1.9"/></svg>
<div class="t r g" style="left:1450.5px;width:200px;top:433.0px;color:#111">9/27/2023 11:36 AM</div>
<div class="t g" style="left:1674.5px;top:433.0px;">Open</div>
<div class="cb" style="left:1747.5px;top:433px"></div>
<div class="t g" style="left:1792.5px;top:433px;width:74px;overflow:hidden;color:#111;letter-spacing:-0.28px">Adele Vance</div>
<div class="a" style="left:241px;top:454px;width:35px;height:27px;background:#66a9e1;"></div>
<div class="a" style="left:276px;top:454px;width:1591px;height:27px;background:#0078d7;"></div>
<div class="a" style="left:525px;top:454px;width:24px;height:27px;background:#6ba5d9;"></div>
<div class="a" style="left:549px;top:454px;width:48px;height:27px;background:#78b3e5;"></div>
<div class="a" style="left:1165px;top:454px;width:48px;height:27px;background:#78b3e5;"></div>
<div class="a" style="left:1469px;top:454px;width:56px;height:27px;background:#78b3e5;"></div>
<div class="a" style="left:1717px;top:454px;width:73px;height:27px;background:#78b3e5;"></div>
<div class="a" style="left:277px;top:454px;width:19px;height:27px;background:#0078d7;"></div>
<div class="a" style="left:241px;top:481px;width:1626px;height:1px;background:#f1f1f1;"></div>
<div class="a" style="left:276px;top:454px;width:1px;height:27px;background:#f3f3f3;"></div>
<div class="a" style="left:296px;top:454px;width:1px;height:27px;background:#f3f3f3;"></div>
<div class="a" style="left:316px;top:454px;width:1px;height:27px;background:#f3f3f3;"></div>
<div class="a" style="left:525px;top:454px;width:1px;height:27px;background:#f3f3f3;"></div>
<div class="a" style="left:549px;top:454px;width:1px;height:27px;background:#f3f3f3;"></div>
<div class="a" style="left:597px;top:454px;width:1px;height:27px;background:#f3f3f3;"></div>
<div class="a" style="left:853px;top:454px;width:1px;height:27px;background:#f3f3f3;"></div>
<div class="a" style="left:1165px;top:454px;width:1px;height:27px;background:#f3f3f3;"></div>
<div class="a" style="left:1213px;top:454px;width:1px;height:27px;background:#f3f3f3;"></div>
<div class="a" style="left:1341px;top:454px;width:1px;height:27px;background:#f3f3f3;"></div>
<div class="a" style="left:1469px;top:454px;width:1px;height:27px;background:#f3f3f3;"></div>
<div class="a" style="left:1525px;top:454px;width:1px;height:27px;background:#f3f3f3;"></div>
<div class="a" style="left:1653px;top:454px;width:1px;height:27px;background:#f3f3f3;"></div>
<div class="a" style="left:1717px;top:454px;width:1px;height:27px;background:#f3f3f3;"></div>
<div class="t r g" style="left:243.5px;width:30px;top:461.0px;color:#fff">2</div>
<div class="t g" style="left:344.5px;top:461.0px;color:#fff;letter-spacing:-0.28px">Adele Vance</div>
<div class="cb" style="left:568.0px;top:461px"></div>
<div class="t g" style="left:600px;top:461.0px;color:#fff;letter-spacing:0.1px">Virtual consultation - Adele Other</div>
<div class="t g" style="left:874px;top:461px;width:290px;overflow:hidden;color:#fff">Customer Info <span style="letter-spacing:.85px">--------------------</span> Name: Adele Oth</div>
<div class="cb" style="left:1184.0px;top:461px"></div>
<div class="t r g" style="left:1138.5px;width:200px;top:461.0px;color:#fff">12/29/2023 10:00 AM</div>
<div class="t r g" style="left:1266.5px;width:200px;top:461.0px;color:#fff">12/29/2023 10:30 AM</div>
<div class="cb" style="left:1491.5px;top:461px"></div>
<div class="t r g" style="left:1450.5px;width:200px;top:461.0px;color:#fff">5/21/2024 05:16 PM</div>
<div class="t g" style="left:1674.5px;top:461.0px;">Open</div>
<div class="cb" style="left:1747.5px;top:461px"></div>
<div class="t g" style="left:1792.5px;top:461px;width:74px;overflow:hidden;color:#fff;letter-spacing:0px">Clinic A</div>
<div class="a" style="left:241px;top:482px;width:35px;height:27px;background:#c8daeb;"></div>
<div class="a" style="left:525px;top:482px;width:24px;height:27px;background:#d9d9d9;"></div>
<div class="a" style="left:549px;top:482px;width:48px;height:27px;background:#f0f0f0;"></div>
<div class="a" style="left:1165px;top:482px;width:48px;height:27px;background:#f0f0f0;"></div>
<div class="a" style="left:1469px;top:482px;width:56px;height:27px;background:#f0f0f0;"></div>
<div class="a" style="left:1717px;top:482px;width:73px;height:27px;background:#f0f0f0;"></div>
<div class="a" style="left:241px;top:509px;width:1626px;height:1px;background:#f1f1f1;"></div>
<div class="a" style="left:276px;top:482px;width:1px;height:27px;background:#f3f3f3;"></div>
<div class="a" style="left:296px;top:482px;width:1px;height:27px;background:#f3f3f3;"></div>
<div class="a" style="left:316px;top:482px;width:1px;height:27px;background:#f3f3f3;"></div>
<div class="a" style="left:525px;top:482px;width:1px;height:27px;background:#f3f3f3;"></div>
<div class="a" style="left:549px;top:482px;width:1px;height:27px;background:#f3f3f3;"></div>
<div class="a" style="left:597px;top:482px;width:1px;height:27px;background:#f3f3f3;"></div>
<div class="a" style="left:853px;top:482px;width:1px;height:27px;background:#f3f3f3;"></div>
<div class="a" style="left:1165px;top:482px;width:1px;height:27px;background:#f3f3f3;"></div>
<div class="a" style="left:1213px;top:482px;width:1px;height:27px;background:#f3f3f3;"></div>
<div class="a" style="left:1341px;top:482px;width:1px;height:27px;background:#f3f3f3;"></div>
<div class="a" style="left:1469px;top:482px;width:1px;height:27px;background:#f3f3f3;"></div>
<div class="a" style="left:1525px;top:482px;width:1px;height:27px;background:#f3f3f3;"></div>
<div class="a" style="left:1653px;top:482px;width:1px;height:27px;background:#f3f3f3;"></div>
<div class="a" style="left:1717px;top:482px;width:1px;height:27px;background:#f3f3f3;"></div>
<div class="t r g" style="left:243.5px;width:30px;top:489.0px;color:#111">2</div>
<div class="t g" style="left:344.5px;top:489.0px;color:#111;letter-spacing:-0.28px">Adele Vance</div>
<div class="cb" style="left:568.0px;top:489px"></div>
<svg style="left:568.0px;top:489px" width="13" height="13" viewBox="0 0 13 13"><path d="M3 6.6 L5.6 9.6 L10 2.8" fill="none" stroke="#b0b0b0" stroke-width="1.9"/></svg>
<div class="t g" style="left:600px;top:489.0px;color:#111;letter-spacing:0px">Marketing review</div>
<div class="t g" style="left:874px;top:489.0px;color:#111">Review webpage</div>
<div class="a" style="left:974px;top:503px;width:189px;height:1px;background:#222;"></div>
<div class="cb" style="left:1184.0px;top:489px"></div>
<div class="t r g" style="left:1138.5px;width:200px;top:489.0px;color:#111">3/18/2024 06:30 PM</div>
<div class="t r g" style="left:1266.5px;width:200px;top:489.0px;color:#111">3/18/2024 07:00 PM</div>
<div class="cb" style="left:1491.5px;top:489px"></div>
<svg style="left:1491.5px;top:489px" width="13" height="13" viewBox="0 0 13 13"><path d="M3 6.6 L5.6 9.6 L10 2.8" fill="none" stroke="#b0b0b0" stroke-width="1.9"/></svg>
<div class="t r g" style="left:1450.5px;width:200px;top:489.0px;color:#111">3/15/2024 06:01 PM</div>
<div class="t g" style="left:1674.5px;top:489.0px;">Open</div>
<div class="cb" style="left:1747.5px;top:489px"></div>
<svg style="left:1747.5px;top:489px" width="13" height="13" viewBox="0 0 13 13"><path d="M3 6.6 L5.6 9.6 L10 2.8" fill="none" stroke="#b0b0b0" stroke-width="1.9"/></svg>
<div class="t g" style="left:1792.5px;top:489px;width:74px;overflow:hidden;color:#111;letter-spacing:-0.28px">Adele Vance</div>
<div class="a" style="left:222px;top:509px;width:1645px;height:1px;background:#666;"></div>
<div class="a" style="left:222px;top:510px;width:54px;height:27px;background:#8fa9c9;"></div>
<div class="a" style="left:222px;top:510px;width:1px;height:27px;background:#777;"></div>
<div class="a" style="left:525px;top:510px;width:1342px;height:27px;background:#d9d9d9;"></div>
<div class="a" style="left:549px;top:510px;width:1px;height:27px;background:#ececec;"></div>
<div class="a" style="left:597px;top:510px;width:1px;height:27px;background:#ececec;"></div>
<div class="a" style="left:853px;top:510px;width:1px;height:27px;background:#ececec;"></div>
<div class="a" style="left:1165px;top:510px;width:1px;height:27px;background:#ececec;"></div>
<div class="a" style="left:1213px;top:510px;width:1px;height:27px;background:#ececec;"></div>
<div class="a" style="left:1341px;top:510px;width:1px;height:27px;background:#ececec;"></div>
<div class="a" style="left:1469px;top:510px;width:1px;height:27px;background:#ececec;"></div>
<div class="a" style="left:1525px;top:510px;width:1px;height:27px;background:#ececec;"></div>
<div class="a" style="left:1653px;top:510px;width:1px;height:27px;background:#ececec;"></div>
<div class="a" style="left:1717px;top:510px;width:1px;height:27px;background:#ececec;"></div>
<div class="a" style="left:222px;top:537px;width:1645px;height:1px;background:#666;"></div>
<div class="a" style="left:276px;top:510px;width:1px;height:27px;background:#ececec;"></div>
<div class="a" style="left:296px;top:510px;width:1px;height:27px;background:#ececec;"></div>
<div class="a" style="left:316px;top:510px;width:1px;height:27px;background:#ececec;"></div>
<div class="t r g" style="left:243.5px;width:30px;top:516.7px;font-weight:bold">1</div>
<div class="t g" style="left:344.5px;top:516.7px;font-weight:bold;letter-spacing:-.2px">Alex Wilber</div>
<div class="a" style="left:241px;top:538px;width:35px;height:27px;background:#c8daeb;"></div>
<div class="a" style="left:525px;top:538px;width:24px;height:27px;background:#d9d9d9;"></div>
<div class="a" style="left:549px;top:538px;width:48px;height:27px;background:#f0f0f0;"></div>
<div class="a" style="left:1165px;top:538px;width:48px;height:27px;background:#f0f0f0;"></div>
<div class="a" style="left:1469px;top:538px;width:56px;height:27px;background:#f0f0f0;"></div>
<div class="a" style="left:1717px;top:538px;width:73px;height:27px;background:#f0f0f0;"></div>
<div class="a" style="left:241px;top:565px;width:1626px;height:1px;background:#f1f1f1;"></div>
<div class="a" style="left:276px;top:538px;width:1px;height:27px;background:#f3f3f3;"></div>
<div class="a" style="left:296px;top:538px;width:1px;height:27px;background:#f3f3f3;"></div>
<div class="a" style="left:316px;top:538px;width:1px;height:27px;background:#f3f3f3;"></div>
<div class="a" style="left:525px;top:538px;width:1px;height:27px;background:#f3f3f3;"></div>
<div class="a" style="left:549px;top:538px;width:1px;height:27px;background:#f3f3f3;"></div>
<div class="a" style="left:597px;top:538px;width:1px;height:27px;background:#f3f3f3;"></div>
<div class="a" style="left:853px;top:538px;width:1px;height:27px;background:#f3f3f3;"></div>
<div class="a" style="left:1165px;top:538px;width:1px;height:27px;background:#f3f3f3;"></div>
<div class="a" style="left:1213px;top:538px;width:1px;height:27px;background:#f3f3f3;"></div>
<div class="a" style="left:1341px;top:538px;width:1px;height:27px;background:#f3f3f3;"></div>
<div class="a" style="left:1469px;top:538px;width:1px;height:27px;background:#f3f3f3;"></div>
<div class="a" style="left:1525px;top:538px;width:1px;height:27px;background:#f3f3f3;"></div>
<div class="a" style="left:1653px;top:538px;width:1px;height:27px;background:#f3f3f3;"></div>
<div class="a" style="left:1717px;top:538px;width:1px;height:27px;background:#f3f3f3;"></div>
<div class="t r g" style="left:243.5px;width:30px;top:545.0px;color:#111">2</div>
<div class="t g" style="left:344.5px;top:545.0px;color:#111;letter-spacing:-0.15px">Alex Wilber</div>
<div class="cb" style="left:568.0px;top:545px"></div>
<svg style="left:568.0px;top:545px" width="13" height="13" viewBox="0 0 13 13"><path d="M3 6.6 L5.6 9.6 L10 2.8" fill="none" stroke="#b0b0b0" stroke-width="1.9"/></svg>
<div class="t g" style="left:600px;top:545.0px;color:#111;letter-spacing:0px">X1050 Marketing sync</div>
<div class="cb" style="left:1184.0px;top:545px"></div>
<div class="t r g" style="left:1138.5px;width:200px;top:545.0px;color:#111">6/25/2019 03:30 PM</div>
<div class="t r g" style="left:1266.5px;width:200px;top:545.0px;color:#111">6/25/2019 04:30 PM</div>
<div class="cb" style="left:1491.5px;top:545px"></div>
<div class="t r g" style="left:1450.5px;width:200px;top:545.0px;color:#111">8/25/2023 09:42 PM</div>
<div class="t g" style="left:1674.5px;top:545.0px;">Open</div>
<div class="cb" style="left:1747.5px;top:545px"></div>
<div class="t g" style="left:1792.5px;top:545px;width:74px;overflow:hidden;color:#111;letter-spacing:0px">Megan Bowe</div>
<div class="a" style="left:241px;top:566px;width:35px;height:27px;background:#c8daeb;"></div>
<div class="a" style="left:525px;top:566px;width:24px;height:27px;background:#d9d9d9;"></div>
<div class="a" style="left:549px;top:566px;width:48px;height:27px;background:#f0f0f0;"></div>
<div class="a" style="left:1165px;top:566px;width:48px;height:27px;background:#f0f0f0;"></div>
<div class="a" style="left:1469px;top:566px;width:56px;height:27px;background:#f0f0f0;"></div>
<div class="a" style="left:1717px;top:566px;width:73px;height:27px;background:#f0f0f0;"></div>
<div class="a" style="left:241px;top:593px;width:1626px;height:1px;background:#f1f1f1;"></div>
<div class="a" style="left:276px;top:566px;width:1px;height:27px;background:#f3f3f3;"></div>
<div class="a" style="left:296px;top:566px;width:1px;height:27px;background:#f3f3f3;"></div>
<div class="a" style="left:316px;top:566px;width:1px;height:27px;background:#f3f3f3;"></div>
<div class="a" style="left:525px;top:566px;width:1px;height:27px;background:#f3f3f3;"></div>
<div class="a" style="left:549px;top:566px;width:1px;height:27px;background:#f3f3f3;"></div>
<div class="a" style="left:597px;top:566px;width:1px;height:27px;background:#f3f3f3;"></div>
<div class="a" style="left:853px;top:566px;width:1px;height:27px;background:#f3f3f3;"></div>
<div class="a" style="left:1165px;top:566px;width:1px;height:27px;background:#f3f3f3;"></div>
<div class="a" style="left:1213px;top:566px;width:1px;height:27px;background:#f3f3f3;"></div>
<div class="a" style="left:1341px;top:566px;width:1px;height:27px;background:#f3f3f3;"></div>
<div class="a" style="left:1469px;top:566px;width:1px;height:27px;background:#f3f3f3;"></div>
<div class="a" style="left:1525px;top:566px;width:1px;height:27px;background:#f3f3f3;"></div>
<div class="a" style="left:1653px;top:566px;width:1px;height:27px;background:#f3f3f3;"></div>
<div class="a" style="left:1717px;top:566px;width:1px;height:27px;background:#f3f3f3;"></div>
<div class="t r g" style="left:243.5px;width:30px;top:573.0px;color:#111">2</div>
<div class="t g" style="left:344.5px;top:573.0px;color:#111;letter-spacing:-0.15px">Alex Wilber</div>
<div class="cb" style="left:568.0px;top:573px"></div>
<svg style="left:568.0px;top:573px" width="13" height="13" viewBox="0 0 13 13"><path d="M3 6.6 L5.6 9.6 L10 2.8" fill="none" stroke="#b0b0b0" stroke-width="1.9"/></svg>
<div class="t g" style="left:600px;top:573.0px;color:#111;letter-spacing:0px">Company All Hands</div>
<div class="t g" style="left:874px;top:573px;width:290px;overflow:hidden;color:#111">Exchange Server re-created a meeting that was m</div>
<div class="cb" style="left:1184.0px;top:573px"></div>
<div class="t r g" style="left:1138.5px;width:200px;top:573.0px;color:#111">9/4/2023 08:00 AM</div>
<div class="t r g" style="left:1266.5px;width:200px;top:573.0px;color:#111">9/4/2023 08:30 AM</div>
<div class="cb" style="left:1491.5px;top:573px"></div>
<div class="t r g" style="left:1450.5px;width:200px;top:573.0px;color:#111">8/28/2023 08:36 PM</div>
<div class="t g" style="left:1674.5px;top:573.0px;">Open</div>
<div class="cb" style="left:1747.5px;top:573px"></div>
<div class="t g" style="left:1792.5px;top:573px;width:74px;overflow:hidden;color:#111;letter-spacing:0px">Mark 8 Proje</div>
<div class="a" style="left:241px;top:594px;width:35px;height:27px;background:#c8daeb;"></div>
<div class="a" style="left:525px;top:594px;width:24px;height:27px;background:#d9d9d9;"></div>
<div class="a" style="left:549px;top:594px;width:48px;height:27px;background:#f0f0f0;"></div>
<div class="a" style="left:1165px;top:594px;width:48px;height:27px;background:#f0f0f0;"></div>
<div class="a" style="left:1469px;top:594px;width:56px;height:27px;background:#f0f0f0;"></div>
<div class="a" style="left:1717px;top:594px;width:73px;height:27px;background:#f0f0f0;"></div>
<div class="a" style="left:241px;top:621px;width:1626px;height:1px;background:#f1f1f1;"></div>
<div class="a" style="left:276px;top:594px;width:1px;height:27px;background:#f3f3f3;"></div>
<div class="a" style="left:296px;top:594px;width:1px;height:27px;background:#f3f3f3;"></div>
<div class="a" style="left:316px;top:594px;width:1px;height:27px;background:#f3f3f3;"></div>
<div class="a" style="left:525px;top:594px;width:1px;height:27px;background:#f3f3f3;"></div>
<div class="a" style="left:549px;top:594px;width:1px;height:27px;background:#f3f3f3;"></div>
<div class="a" style="left:597px;top:594px;width:1px;height:27px;background:#f3f3f3;"></div>
<div class="a" style="left:853px;top:594px;width:1px;height:27px;background:#f3f3f3;"></div>
<div class="a" style="left:1165px;top:594px;width:1px;height:27px;background:#f3f3f3;"></div>
<div class="a" style="left:1213px;top:594px;width:1px;height:27px;background:#f3f3f3;"></div>
<div class="a" style="left:1341px;top:594px;width:1px;height:27px;background:#f3f3f3;"></div>
<div class="a" style="left:1469px;top:594px;width:1px;height:27px;background:#f3f3f3;"></div>
<div class="a" style="left:1525px;top:594px;width:1px;height:27px;background:#f3f3f3;"></div>
<div class="a" style="left:1653px;top:594px;width:1px;height:27px;background:#f3f3f3;"></div>
<div class="a" style="left:1717px;top:594px;width:1px;height:27px;background:#f3f3f3;"></div>
<div class="t r g" style="left:243.5px;width:30px;top:601.0px;color:#111">2</div>
<div class="t g" style="left:344.5px;top:601.0px;color:#111;letter-spacing:-0.15px">Alex Wilber</div>
<div class="cb" style="left:568.0px;top:601px"></div>
<svg style="left:568.0px;top:601px" width="13" height="13" viewBox="0 0 13 13"><path d="M3 6.6 L5.6 9.6 L10 2.8" fill="none" stroke="#b0b0b0" stroke-width="1.9"/></svg>
<div class="t g" style="left:600px;top:601.0px;color:#111;letter-spacing:0px">X1050 Marketing sync</div>
<div class="t g" style="left:874px;top:601px;width:290px;overflow:hidden;color:#111">Exchange Server re-created a meeting that was m</div>
<div class="cb" style="left:1184.0px;top:601px"></div>
<div class="t r g" style="left:1138.5px;width:200px;top:601.0px;color:#111">9/4/2023 03:30 PM</div>
<div class="t r g" style="left:1266.5px;width:200px;top:601.0px;color:#111">9/4/2023 04:30 PM</div>
<div class="cb" style="left:1491.5px;top:601px"></div>
<div class="t r g" style="left:1450.5px;width:200px;top:601.0px;color:#111">8/28/2023 08:36 PM</div>
<div class="t g" style="left:1674.5px;top:601.0px;">Open</div>
<div class="cb" style="left:1747.5px;top:601px"></div>
<div class="t g" style="left:1792.5px;top:601px;width:74px;overflow:hidden;color:#111;letter-spacing:0px">Mark 8 Proje</div>
<div class="a" style="left:241px;top:622px;width:35px;height:27px;background:#c8daeb;"></div>
<div class="a" style="left:525px;top:622px;width:24px;height:27px;background:#d9d9d9;"></div>
<div class="a" style="left:549px;top:622px;width:48px;height:27px;background:#f0f0f0;"></div>
<div class="a" style="left:1165px;top:622px;width:48px;height:27px;background:#f0f0f0;"></div>
<div class="a" style="left:1469px;top:622px;width:56px;height:27px;background:#f0f0f0;"></div>
<div class="a" style="left:1717px;top:622px;width:73px;height:27px;background:#f0f0f0;"></div>
<div class="a" style="left:241px;top:649px;width:1626px;height:1px;background:#f1f1f1;"></div>
<div class="a" style="left:276px;top:622px;width:1px;height:27px;background:#f3f3f3;"></div>
<div class="a" style="left:296px;top:622px;width:1px;height:27px;background:#f3f3f3;"></div>
<div class="a" style="left:316px;top:622px;width:1px;height:27px;background:#f3f3f3;"></div>
<div class="a" style="left:525px;top:622px;width:1px;height:27px;background:#f3f3f3;"></div>
<div class="a" style="left:549px;top:622px;width:1px;height:27px;background:#f3f3f3;"></div>
<div class="a" style="left:597px;top:622px;width:1px;height:27px;background:#f3f3f3;"></div>
<div class="a" style="left:853px;top:622px;width:1px;height:27px;background:#f3f3f3;"></div>
<div class="a" style="left:1165px;top:622px;width:1px;height:27px;background:#f3f3f3;"></div>
<div class="a" style="left:1213px;top:622px;width:1px;height:27px;background:#f3f3f3;"></div>
<div class="a" style="left:1341px;top:622px;width:1px;height:27px;background:#f3f3f3;"></div>
<div class="a" style="left:1469px;top:622px;width:1px;height:27px;background:#f3f3f3;"></div>
<div class="a" style="left:1525px;top:622px;width:1px;height:27px;background:#f3f3f3;"></div>
<div class="a" style="left:1653px;top:622px;width:1px;height:27px;background:#f3f3f3;"></div>
<div class="a" style="left:1717px;top:622px;width:1px;height:27px;background:#f3f3f3;"></div>
<div class="t r g" style="left:243.5px;width:30px;top:629.0px;color:#111">2</div>
<div class="t g" style="left:344.5px;top:629.0px;color:#111;letter-spacing:-0.15px">Alex Wilber</div>
<div class="cb" style="left:568.0px;top:629px"></div>
<svg style="left:568.0px;top:629px" width="13" height="13" viewBox="0 0 13 13"><path d="M3 6.6 L5.6 9.6 L10 2.8" fill="none" stroke="#b0b0b0" stroke-width="1.9"/></svg>
<div class="t g" style="left:600px;top:629.0px;color:#111;letter-spacing:0px">H2 Goals</div>
<div class="t g" style="left:874px;top:629px;width:290px;overflow:hidden;color:#111">Exchange Server re-created a meeting that was m</div>
<div class="cb" style="left:1184.0px;top:629px"></div>
<div class="t r g" style="left:1138.5px;width:200px;top:629.0px;color:#111">9/6/2023 05:00 PM</div>
<div class="t r g" style="left:1266.5px;width:200px;top:629.0px;color:#111">9/6/2023 06:00 PM</div>
<div class="cb" style="left:1491.5px;top:629px"></div>
<div class="t r g" style="left:1450.5px;width:200px;top:629.0px;color:#111">8/30/2023 10:46 PM</div>
<div class="t g" style="left:1674.5px;top:629.0px;">Open</div>
<div class="cb" style="left:1747.5px;top:629px"></div>
<div class="t g" style="left:1792.5px;top:629px;width:74px;overflow:hidden;color:#111;letter-spacing:0px">Sales and Ma</div>
<div class="a" style="left:241px;top:650px;width:35px;height:27px;background:#c8daeb;"></div>
<div class="a" style="left:525px;top:650px;width:24px;height:27px;background:#d9d9d9;"></div>
<div class="a" style="left:549px;top:650px;width:48px;height:27px;background:#f0f0f0;"></div>
<div class="a" style="left:1165px;top:650px;width:48px;height:27px;background:#f0f0f0;"></div>
<div class="a" style="left:1469px;top:650px;width:56px;height:27px;background:#f0f0f0;"></div>
<div class="a" style="left:1717px;top:650px;width:73px;height:27px;background:#f0f0f0;"></div>
<div class="a" style="left:241px;top:677px;width:1626px;height:1px;background:#f1f1f1;"></div>
<div class="a" style="left:276px;top:650px;width:1px;height:27px;background:#f3f3f3;"></div>
<div class="a" style="left:296px;top:650px;width:1px;height:27px;background:#f3f3f3;"></div>
<div class="a" style="left:316px;top:650px;width:1px;height:27px;background:#f3f3f3;"></div>
<div class="a" style="left:525px;top:650px;width:1px;height:27px;background:#f3f3f3;"></div>
<div class="a" style="left:549px;top:650px;width:1px;height:27px;background:#f3f3f3;"></div>
<div class="a" style="left:597px;top:650px;width:1px;height:27px;background:#f3f3f3;"></div>
<div class="a" style="left:853px;top:650px;width:1px;height:27px;background:#f3f3f3;"></div>
<div class="a" style="left:1165px;top:650px;width:1px;height:27px;background:#f3f3f3;"></div>
<div class="a" style="left:1213px;top:650px;width:1px;height:27px;background:#f3f3f3;"></div>
<div class="a" style="left:1341px;top:650px;width:1px;height:27px;background:#f3f3f3;"></div>
<div class="a" style="left:1469px;top:650px;width:1px;height:27px;background:#f3f3f3;"></div>
<div class="a" style="left:1525px;top:650px;width:1px;height:27px;background:#f3f3f3;"></div>
<div class="a" style="left:1653px;top:650px;width:1px;height:27px;background:#f3f3f3;"></div>
<div class="a" style="left:1717px;top:650px;width:1px;height:27px;background:#f3f3f3;"></div>
<div class="t r g" style="left:243.5px;width:30px;top:657.0px;color:#111">2</div>
<div class="t g" style="left:344.5px;top:657.0px;color:#111;letter-spacing:-0.15px">Alex Wilber</div>
<div class="cb" style="left:568.0px;top:657px"></div>
<div class="t g" style="left:600px;top:657.0px;color:#111;letter-spacing:0px">Planogram Training</div>
<div class="t g" style="left:874px;top:657px;width:290px;overflow:hidden;color:#111">Exchange Server re-created a meeting that was m</div>
<div class="cb" style="left:1184.0px;top:657px"></div>
<div class="t r g" style="left:1138.5px;width:200px;top:657.0px;color:#111">9/5/2023 06:00 PM</div>
<div class="t r g" style="left:1266.5px;width:200px;top:657.0px;color:#111">9/5/2023 07:00 PM</div>
<div class="cb" style="left:1491.5px;top:657px"></div>
<div class="t r g" style="left:1450.5px;width:200px;top:657.0px;color:#111">9/1/2023 07:08 PM</div>
<div class="t g" style="left:1674.5px;top:657.0px;">Open</div>
<div class="cb" style="left:1747.5px;top:657px"></div>
<div class="t g" style="left:1792.5px;top:657px;width:74px;overflow:hidden;color:#111;letter-spacing:0px">Retail</div>
<div class="a" style="left:241px;top:678px;width:35px;height:27px;background:#c8daeb;"></div>
<div class="a" style="left:525px;top:678px;width:24px;height:27px;background:#d9d9d9;"></div>
<div class="a" style="left:549px;top:678px;width:48px;height:27px;background:#f0f0f0;"></div>
<div class="a" style="left:1165px;top:678px;width:48px;height:27px;background:#f0f0f0;"></div>
<div class="a" style="left:1469px;top:678px;width:56px;height:27px;background:#f0f0f0;"></div>
<div class="a" style="left:1717px;top:678px;width:73px;height:27px;background:#f0f0f0;"></div>
<div class="a" style="left:241px;top:705px;width:1626px;height:1px;background:#f1f1f1;"></div>
<div class="a" style="left:276px;top:678px;width:1px;height:27px;background:#f3f3f3;"></div>
<div class="a" style="left:296px;top:678px;width:1px;height:27px;background:#f3f3f3;"></div>
<div class="a" style="left:316px;top:678px;width:1px;height:27px;background:#f3f3f3;"></div>
<div class="a" style="left:525px;top:678px;width:1px;height:27px;background:#f3f3f3;"></div>
<div class="a" style="left:549px;top:678px;width:1px;height:27px;background:#f3f3f3;"></div>
<div class="a" style="left:597px;top:678px;width:1px;height:27px;background:#f3f3f3;"></div>
<div class="a" style="left:853px;top:678px;width:1px;height:27px;background:#f3f3f3;"></div>
<div class="a" style="left:1165px;top:678px;width:1px;height:27px;background:#f3f3f3;"></div>
<div class="a" style="left:1213px;top:678px;width:1px;height:27px;background:#f3f3f3;"></div>
<div class="a" style="left:1341px;top:678px;width:1px;height:27px;background:#f3f3f3;"></div>
<div class="a" style="left:1469px;top:678px;width:1px;height:27px;background:#f3f3f3;"></div>
<div class="a" style="left:1525px;top:678px;width:1px;height:27px;background:#f3f3f3;"></div>
<div class="a" style="left:1653px;top:678px;width:1px;height:27px;background:#f3f3f3;"></div>
<div class="a" style="left:1717px;top:678px;width:1px;height:27px;background:#f3f3f3;"></div>
<div class="t r g" style="left:243.5px;width:30px;top:685.0px;color:#111">2</div>
<div class="t g" style="left:344.5px;top:685.0px;color:#111;letter-spacing:-0.15px">Alex Wilber</div>
<div class="cb" style="left:568.0px;top:685px"></div>
<svg style="left:568.0px;top:685px" width="13" height="13" viewBox="0 0 13 13"><path d="M3 6.6 L5.6 9.6 L10 2.8" fill="none" stroke="#b0b0b0" stroke-width="1.9"/></svg>
<div class="t g" style="left:600px;top:685.0px;color:#111;letter-spacing:0px">Design review</div>
<div class="t g" style="left:874px;top:685px;width:290px;overflow:hidden;color:#111">Exchange Server re-created a meeting that was m</div>
<div class="cb" style="left:1184.0px;top:685px"></div>
<div class="t r g" style="left:1138.5px;width:200px;top:685.0px;color:#111">9/4/2023 02:00 PM</div>
<div class="t r g" style="left:1266.5px;width:200px;top:685.0px;color:#111">9/4/2023 03:00 PM</div>
<div class="cb" style="left:1491.5px;top:685px"></div>
<div class="t r g" style="left:1450.5px;width:200px;top:685.0px;color:#111">9/15/2023 08:38 PM</div>
<div class="t g" style="left:1674.5px;top:685.0px;">Open</div>
<div class="cb" style="left:1747.5px;top:685px"></div>
<div class="t g" style="left:1792.5px;top:685px;width:74px;overflow:hidden;color:#111;letter-spacing:0px">Design</div>
<div class="a" style="left:241px;top:706px;width:35px;height:27px;background:#c8daeb;"></div>
<div class="a" style="left:525px;top:706px;width:24px;height:27px;background:#d9d9d9;"></div>
<div class="a" style="left:549px;top:706px;width:48px;height:27px;background:#f0f0f0;"></div>
<div class="a" style="left:1165px;top:706px;width:48px;height:27px;background:#f0f0f0;"></div>
<div class="a" style="left:1469px;top:706px;width:56px;height:27px;background:#f0f0f0;"></div>
<div class="a" style="left:1717px;top:706px;width:73px;height:27px;background:#f0f0f0;"></div>
<div class="a" style="left:241px;top:733px;width:1626px;height:1px;background:#f1f1f1;"></div>
<div class="a" style="left:276px;top:706px;width:1px;height:27px;background:#f3f3f3;"></div>
<div class="a" style="left:296px;top:706px;width:1px;height:27px;background:#f3f3f3;"></div>
<div class="a" style="left:316px;top:706px;width:1px;height:27px;background:#f3f3f3;"></div>
<div class="a" style="left:525px;top:706px;width:1px;height:27px;background:#f3f3f3;"></div>
<div class="a" style="left:549px;top:706px;width:1px;height:27px;background:#f3f3f3;"></div>
<div class="a" style="left:597px;top:706px;width:1px;height:27px;background:#f3f3f3;"></div>
<div class="a" style="left:853px;top:706px;width:1px;height:27px;background:#f3f3f3;"></div>
<div class="a" style="left:1165px;top:706px;width:1px;height:27px;background:#f3f3f3;"></div>
<div class="a" style="left:1213px;top:706px;width:1px;height:27px;background:#f3f3f3;"></div>
<div class="a" style="left:1341px;top:706px;width:1px;height:27px;background:#f3f3f3;"></div>
<div class="a" style="left:1469px;top:706px;width:1px;height:27px;background:#f3f3f3;"></div>
<div class="a" style="left:1525px;top:706px;width:1px;height:27px;background:#f3f3f3;"></div>
<div class="a" style="left:1653px;top:706px;width:1px;height:27px;background:#f3f3f3;"></div>
<div class="a" style="left:1717px;top:706px;width:1px;height:27px;background:#f3f3f3;"></div>
<div class="t r g" style="left:243.5px;width:30px;top:713.0px;color:#111">2</div>
<div class="t g" style="left:344.5px;top:713.0px;color:#111;letter-spacing:-0.15px">Alex Wilber</div>
<div class="cb" style="left:568.0px;top:713px"></div>
<svg style="left:568.0px;top:713px" width="13" height="13" viewBox="0 0 13 13"><path d="M3 6.6 L5.6 9.6 L10 2.8" fill="none" stroke="#b0b0b0" stroke-width="1.9"/></svg>
<div class="t g" style="left:600px;top:713.0px;color:#111;letter-spacing:0px">Digital Offsite</div>
<div class="t g" style="left:874px;top:713px;width:290px;overflow:hidden;color:#111">Exchange Server re-created a meeting that was m</div>
<div class="cb" style="left:1184.0px;top:713px"></div>
<div class="t r g" style="left:1138.5px;width:200px;top:713.0px;color:#111">9/6/2023 02:00 PM</div>
<div class="t r g" style="left:1266.5px;width:200px;top:713.0px;color:#111">9/6/2023 08:00 PM</div>
<div class="cb" style="left:1491.5px;top:713px"></div>
<div class="t r g" style="left:1450.5px;width:200px;top:713.0px;color:#111">9/15/2023 08:38 PM</div>
<div class="t g" style="left:1674.5px;top:713.0px;">Open</div>
<div class="cb" style="left:1747.5px;top:713px"></div>
<div class="t g" style="left:1792.5px;top:713px;width:74px;overflow:hidden;color:#111;letter-spacing:0px">Design</div>
<div class="a" style="left:241px;top:734px;width:35px;height:27px;background:#c8daeb;"></div>
<div class="a" style="left:525px;top:734px;width:24px;height:27px;background:#d9d9d9;"></div>
<div class="a" style="left:549px;top:734px;width:48px;height:27px;background:#f0f0f0;"></div>
<div class="a" style="left:1165px;top:734px;width:48px;height:27px;background:#f0f0f0;"></div>
<div class="a" style="left:1469px;top:734px;width:56px;height:27px;background:#f0f0f0;"></div>
<div class="a" style="left:1717px;top:734px;width:73px;height:27px;background:#f0f0f0;"></div>
<div class="a" style="left:241px;top:761px;width:1626px;height:1px;background:#f1f1f1;"></div>
<div class="a" style="left:276px;top:734px;width:1px;height:27px;background:#f3f3f3;"></div>
<div class="a" style="left:296px;top:734px;width:1px;height:27px;background:#f3f3f3;"></div>
<div class="a" style="left:316px;top:734px;width:1px;height:27px;background:#f3f3f3;"></div>
<div class="a" style="left:525px;top:734px;width:1px;height:27px;background:#f3f3f3;"></div>
<div class="a" style="left:549px;top:734px;width:1px;height:27px;background:#f3f3f3;"></div>
<div class="a" style="left:597px;top:734px;width:1px;height:27px;background:#f3f3f3;"></div>
<div class="a" style="left:853px;top:734px;width:1px;height:27px;background:#f3f3f3;"></div>
<div class="a" style="left:1165px;top:734px;width:1px;height:27px;background:#f3f3f3;"></div>
<div class="a" style="left:1213px;top:734px;width:1px;height:27px;background:#f3f3f3;"></div>
<div class="a" style="left:1341px;top:734px;width:1px;height:27px;background:#f3f3f3;"></div>
<div class="a" style="left:1469px;top:734px;width:1px;height:27px;background:#f3f3f3;"></div>
<div class="a" style="left:1525px;top:734px;width:1px;height:27px;background:#f3f3f3;"></div>
<div class="a" style="left:1653px;top:734px;width:1px;height:27px;background:#f3f3f3;"></div>
<div class="a" style="left:1717px;top:734px;width:1px;height:27px;background:#f3f3f3;"></div>
<div class="t r g" style="left:243.5px;width:30px;top:741.0px;color:#111">2</div>
<div class="t g" style="left:344.5px;top:741.0px;color:#111;letter-spacing:-0.15px">Alex Wilber</div>
<div class="cb" style="left:568.0px;top:741px"></div>
<svg style="left:568.0px;top:741px" width="13" height="13" viewBox="0 0 13 13"><path d="M3 6.6 L5.6 9.6 L10 2.8" fill="none" stroke="#b0b0b0" stroke-width="1.9"/></svg>
<div class="t g" style="left:600px;top:741.0px;color:#111;letter-spacing:0px">Design editorial sync</div>
<div class="t g" style="left:874px;top:741px;width:290px;overflow:hidden;color:#111">Exchange Server re-created a meeting that was m</div>
<div class="cb" style="left:1184.0px;top:741px"></div>
<div class="t r g" style="left:1138.5px;width:200px;top:741.0px;color:#111">9/4/2023 05:30 PM</div>
<div class="t r g" style="left:1266.5px;width:200px;top:741.0px;color:#111">9/4/2023 06:30 PM</div>
<div class="cb" style="left:1491.5px;top:741px"></div>
<div class="t r g" style="left:1450.5px;width:200px;top:741.0px;color:#111">9/15/2023 08:38 PM</div>
<div class="t g" style="left:1674.5px;top:741.0px;">Open</div>
<div class="cb" style="left:1747.5px;top:741px"></div>
<div class="t g" style="left:1792.5px;top:741px;width:74px;overflow:hidden;color:#111;letter-spacing:0px">Design</div>
<div class="a" style="left:241px;top:762px;width:35px;height:27px;background:#c8daeb;"></div>
<div class="a" style="left:525px;top:762px;width:24px;height:27px;background:#d9d9d9;"></div>
<div class="a" style="left:549px;top:762px;width:48px;height:27px;background:#f0f0f0;"></div>
<div class="a" style="left:1165px;top:762px;width:48px;height:27px;background:#f0f0f0;"></div>
<div class="a" style="left:1469px;top:762px;width:56px;height:27px;background:#f0f0f0;"></div>
<div class="a" style="left:1717px;top:762px;width:73px;height:27px;background:#f0f0f0;"></div>
<div class="a" style="left:241px;top:789px;width:1626px;height:1px;background:#f1f1f1;"></div>
<div class="a" style="left:276px;top:762px;width:1px;height:27px;background:#f3f3f3;"></div>
<div class="a" style="left:296px;top:762px;width:1px;height:27px;background:#f3f3f3;"></div>
<div class="a" style="left:316px;top:762px;width:1px;height:27px;background:#f3f3f3;"></div>
<div class="a" style="left:525px;top:762px;width:1px;height:27px;background:#f3f3f3;"></div>
<div class="a" style="left:549px;top:762px;width:1px;height:27px;background:#f3f3f3;"></div>
<div class="a" style="left:597px;top:762px;width:1px;height:27px;background:#f3f3f3;"></div>
<div class="a" style="left:853px;top:762px;width:1px;height:27px;background:#f3f3f3;"></div>
<div class="a" style="left:1165px;top:762px;width:1px;height:27px;background:#f3f3f3;"></div>
<div class="a" style="left:1213px;top:762px;width:1px;height:27px;background:#f3f3f3;"></div>
<div class="a" style="left:1341px;top:762px;width:1px;height:27px;background:#f3f3f3;"></div>
<div class="a" style="left:1469px;top:762px;width:1px;height:27px;background:#f3f3f3;"></div>
<div class="a" style="left:1525px;top:762px;width:1px;height:27px;background:#f3f3f3;"></div>
<div class="a" style="left:1653px;top:762px;width:1px;height:27px;background:#f3f3f3;"></div>
<div class="a" style="left:1717px;top:762px;width:1px;height:27px;background:#f3f3f3;"></div>
<div class="t r g" style="left:243.5px;width:30px;top:769.0px;color:#111">2</div>
<div class="t g" style="left:344.5px;top:769.0px;color:#111;letter-spacing:-0.15px">Alex Wilber</div>
<div class="cb" style="left:568.0px;top:769px"></div>
<div class="t g" style="left:600px;top:769.0px;color:#111;letter-spacing:0px">Room meet</div>
<div class="cb" style="left:1184.0px;top:769px"></div>
<div class="t r g" style="left:1138.5px;width:200px;top:769.0px;color:#111">9/19/2023 10:00 AM</div>
<div class="t r g" style="left:1266.5px;width:200px;top:769.0px;color:#111">9/19/2023 10:30 AM</div>
<div class="cb" style="left:1491.5px;top:769px"></div>
<div class="t r g" style="left:1450.5px;width:200px;top:769.0px;color:#111">9/18/2023 06:39 PM</div>
<div class="t g" style="left:1674.5px;top:769.0px;">Open</div>
<div class="cb" style="left:1747.5px;top:769px"></div>
<div class="t g" style="left:1792.5px;top:769px;width:74px;overflow:hidden;color:#111;letter-spacing:-0.28px">Amy Ames Al</div>
<div class="a" style="left:241px;top:790px;width:35px;height:27px;background:#c8daeb;"></div>
<div class="a" style="left:525px;top:790px;width:24px;height:27px;background:#d9d9d9;"></div>
<div class="a" style="left:549px;top:790px;width:48px;height:27px;background:#f0f0f0;"></div>
<div class="a" style="left:1165px;top:790px;width:48px;height:27px;background:#f0f0f0;"></div>
<div class="a" style="left:1469px;top:790px;width:56px;height:27px;background:#f0f0f0;"></div>
<div class="a" style="left:1717px;top:790px;width:73px;height:27px;background:#f0f0f0;"></div>
<div class="a" style="left:241px;top:817px;width:1626px;height:1px;background:#f1f1f1;"></div>
<div class="a" style="left:276px;top:790px;width:1px;height:27px;background:#f3f3f3;"></div>
<div class="a" style="left:296px;top:790px;width:1px;height:27px;background:#f3f3f3;"></div>
<div class="a" style="left:316px;top:790px;width:1px;height:27px;background:#f3f3f3;"></div>
<div class="a" style="left:525px;top:790px;width:1px;height:27px;background:#f3f3f3;"></div>
<div class="a" style="left:549px;top:790px;width:1px;height:27px;background:#f3f3f3;"></div>
<div class="a" style="left:597px;top:790px;width:1px;height:27px;background:#f3f3f3;"></div>
<div class="a" style="left:853px;top:790px;width:1px;height:27px;background:#f3f3f3;"></div>
<div class="a" style="left:1165px;top:790px;width:1px;height:27px;background:#f3f3f3;"></div>
<div class="a" style="left:1213px;top:790px;width:1px;height:27px;background:#f3f3f3;"></div>
<div class="a" style="left:1341px;top:790px;width:1px;height:27px;background:#f3f3f3;"></div>
<div class="a" style="left:1469px;top:790px;width:1px;height:27px;background:#f3f3f3;"></div>
<div class="a" style="left:1525px;top:790px;width:1px;height:27px;background:#f3f3f3;"></div>
<div class="a" style="left:1653px;top:790px;width:1px;height:27px;background:#f3f3f3;"></div>
<div class="a" style="left:1717px;top:790px;width:1px;height:27px;background:#f3f3f3;"></div>
<div class="t r g" style="left:243.5px;width:30px;top:797.0px;color:#111">2</div>
<div class="t g" style="left:344.5px;top:797.0px;color:#111;letter-spacing:-0.15px">Alex Wilber</div>
<div class="cb" style="left:568.0px;top:797px"></div>
<svg style="left:568.0px;top:797px" width="13" height="13" viewBox="0 0 13 13"><path d="M3 6.6 L5.6 9.6 L10 2.8" fill="none" stroke="#b0b0b0" stroke-width="1.9"/></svg>
<div class="t g" style="left:600px;top:797.0px;color:#111;letter-spacing:0.15px">Roundtable brainstorming</div>
<div class="t g" style="left:874px;top:797px;width:290px;overflow:hidden;color:#111">All ideas welcome50k-filtered-rows.ytr_rest</div>
<div class="cb" style="left:1184.0px;top:797px"></div>
<div class="t r g" style="left:1138.5px;width:200px;top:797.0px;color:#111">9/20/2023 10:30 AM</div>
<div class="t r g" style="left:1266.5px;width:200px;top:797.0px;color:#111">9/20/2023 11:30 AM</div>
<div class="cb" style="left:1491.5px;top:797px"></div>
<div class="t r g" style="left:1450.5px;width:200px;top:797.0px;color:#111">9/18/2023 06:44 PM</div>
<div class="t g" style="left:1674.5px;top:797.0px;">Open</div>
<div class="cb" style="left:1747.5px;top:797px"></div>
<div class="t g" style="left:1792.5px;top:797px;width:74px;overflow:hidden;color:#111;letter-spacing:-0.28px">Amy Ames Al</div>
<div class="a" style="left:341px;top:230px;width:1px;height:588px;background:#2f3b55;"></div>
<div class="a" style="left:1790px;top:230px;width:1px;height:588px;background:#0078d7;"></div>
<div class="a" style="left:222px;top:1021px;width:1645px;height:16px;background:linear-gradient(#e9e9e9,#fdfdfd 30%,#f4f4f4)"></div>
<div class="a" style="left:239px;top:1021px;width:1166px;height:15px;background:#8e8e8e;"></div>
<div class="a" style="left:229px;top:1024px;width:0;height:0;border-top:4.5px solid transparent;border-bottom:4.5px solid transparent;border-right:5px solid #2f3b55"></div>
<div class="a" style="left:1855px;top:1024px;width:0;height:0;border-top:4.5px solid transparent;border-bottom:4.5px solid transparent;border-left:5px solid #2f3b55"></div>
<div class="a" style="left:1867px;top:184px;width:43px;height:853px;background:#7950c0;"></div>
<div class="a" style="left:1867px;top:184px;width:43px;height:47px;background:#5530a0;"></div>
<div class="a" style="left:1917px;top:184px;width:1px;height:853px;background:#e3e3e3;"></div>
<div class="a" style="left:1911px;top:597px;width:6px;height:26px;border:1px solid #c8c8c8;border-radius:2px;background:linear-gradient(90deg,#f4f4f4,#dcdcdc)"></div>
<div class="t " style="left:7.5px;top:1039.5px;color:#111;font-size:13px;letter-spacing:-.04px">Rows Loaded: 21 | Rows Displayed: 21 | Rows Selected: 1 | Hierarchy view with 2 top row(s)</div>
<div class="a" style="left:2px;top:1057px;width:1916px;height:20px;background:#7950c0;"></div>
<div class="t " style="left:5.5px;top:1059.5px;color:#fff;font-size:12px;letter-spacing:-.65px">Ready</div>
<div class="t " style="left:1815.5px;top:1059.5px;color:#b7a3de;font-size:11.5px;letter-spacing:-.6px">CAP</div>
<div class="t " style="left:1848px;top:1059.5px;color:#b7a3de;font-size:11.5px;letter-spacing:-.6px">NUM</div>
<div class="t " style="left:1886px;top:1059.5px;color:#b7a3de;font-size:11.5px;letter-spacing:-.6px">SCRL</div>
<div class="a" style="left:0px;top:1077px;width:1920px;height:3px;background:#3b3b3b;"></div>
<div class="a" style="left:47px;top:1077px;width:289px;height:3px;background:#fff;"></div>
<svg style="left:0;top:0" width="1920" height="1080" viewBox="0 0 1920 1080"><defs>
<symbol id="lock" overflow="visible"><path d="M2.2 4.6 V3.4 a2.4 2.6 0 0 1 4.8 0 V4.6" fill="none" stroke="#e8ac5c" stroke-width="1.7"/><rect x="0" y="4.5" width="9.2" height="6.7" rx=".8" fill="#e8ac5c"/><path d="M4.6 6.6 a.9 .9 0 0 1 .5 1.7 L5.3 9.6 H3.9 L4.1 8.3 a.9 .9 0 0 1 .5 -1.7z" fill="#fff"/></symbol>
<symbol id="minus" overflow="visible"><rect x=".5" y=".5" width="15" height="15" fill="#33435e" stroke="#fff" stroke-width="1"/><rect x="3.2" y="6.8" width="9.8" height="2.4" fill="#fff"/></symbol>
<symbol id="person" overflow="visible"><circle cx="6.9" cy="4.3" r="4.1" fill="#2880c0"/><path d="M0 14 V12.2 Q0 9.6 3.2 9.3 Q6.9 11.2 10.6 9.3 Q13.8 9.6 13.8 12.2 V14 Z" fill="#2880c0"/></symbol>
<symbol id="target" overflow="visible"><circle cx="7" cy="7" r="6.1" fill="#fff" stroke="#777" stroke-width="1.2"/><circle cx="7" cy="7" r="3" fill="#9a9a9a"/></symbol>
<symbol id="targets" overflow="visible"><rect x="-1" y="-1" width="16" height="16" fill="#fff"/><circle cx="7" cy="7" r="6.1" fill="#fff" stroke="#777" stroke-width="1.2"/><circle cx="7" cy="7" r="3" fill="#9a9a9a"/></symbol>
<symbol id="cal" overflow="visible"><rect x="2.2" y="0" width="1.9" height="3" fill="#2a7abf"/><rect x="7.9" y="0" width="1.9" height="3" fill="#2a7abf"/><rect x="0" y="1.8" width="12" height="3.2" fill="#2a7abf"/><rect x="0" y="6" width="12" height="8" fill="#2a7abf"/><path d="M2.8 10 L5 12.2 L9.3 7.8" fill="none" stroke="#fff" stroke-width="1.7"/></symbol>
<symbol id="cals" overflow="visible"><path d="M-1 1 H1.4 V-1 H4.9 V1 H7.1 V-1 H10.6 V1 H13 V15 H-1Z" fill="#fff"/><rect x="2.2" y="0" width="1.9" height="3" fill="#2a7abf"/><rect x="7.9" y="0" width="1.9" height="3" fill="#2a7abf"/><rect x="0" y="1.8" width="12" height="3.2" fill="#2a7abf"/><rect x="0" y="6" width="12" height="8" fill="#2a7abf"/><path d="M2.8 10 L5 12.2 L9.3 7.8" fill="none" stroke="#fff" stroke-width="1.7"/></symbol>
<symbol id="eye" overflow="visible"><path d="M0 5.6 Q8.2 -5.4 16.4 5.6 Q8.2 16.6 0 5.6Z" fill="#2a7fbf"/><circle cx="8.1" cy="5.5" r="3.6" fill="none" stroke="#fff" stroke-width="1"/><circle cx="7" cy="4.3" r=".9" fill="#fff"/></symbol>
<symbol id="eyes" overflow="visible"><rect x="-.3" y="-2.6" width="16.5" height="16" fill="#fff"/><path d="M0 5.6 Q8.2 -5.4 16.4 5.6 Q8.2 16.6 0 5.6Z" fill="#2a7fbf"/><circle cx="8.1" cy="5.5" r="3.6" fill="none" stroke="#fff" stroke-width="1"/><circle cx="7" cy="4.3" r=".9" fill="#fff"/></symbol>
<symbol id="open" overflow="visible"><path d="M9 2.9 H.9 V13.1 H12.1 V7.6" fill="none" stroke="#1f78b8" stroke-width="1.8"/><path d="M5.6 9.6 L13.6 1.6" fill="none" stroke="#1f78b8" stroke-width="2"/><path d="M10.6 0 H16 V5.2 Z" fill="#1f78b8"/></symbol>
<symbol id="opens" overflow="visible"><rect x="0" y="-2" width="16" height="16" fill="#fff"/><path d="M9 2.9 H.9 V13.1 H12.1 V7.6" fill="none" stroke="#1f78b8" stroke-width="1.8"/><path d="M5.6 9.6 L13.6 1.6" fill="none" stroke="#1f78b8" stroke-width="2"/><path d="M10.6 0 H16 V5.2 Z" fill="#1f78b8"/></symbol>
<symbol id="doc" overflow="visible"><path d="M2 .75 H9.5 L14.25 5.5 V17.5 a1.3 1.3 0 0 1 -1.3 1.3 H2 A1.3 1.3 0 0 1 .75 17.5 V2 A1.3 1.3 0 0 1 2 .75 Z" fill="#fff" stroke="#555" stroke-width="1.5"/><path d="M9.3 1 V5.7 H14" fill="none" stroke="#555" stroke-width="1.3"/><rect x="4" y="9.9" width="7" height="1.5" fill="#555"/><rect x="4" y="13" width="7" height="1.5" fill="#555"/></symbol>
<symbol id="clip" overflow="visible"><path d="M15 24.5 L27.9 11.7 A6.2 6.2 0 0 0 19.4 2.5 L2.2 20.1 A4.6 4.6 0 0 0 9.2 25.8 L20.5 14.5 A2.9 2.9 0 0 0 16.6 10.1 L8.9 18.4" fill="none" stroke-linecap="round"/></symbol>
</defs><rect x="36.2" y="6" width="6.3" height="11.5" fill="#c9d8ea"/><rect x="42" y="10.7" width="5.3" height="10.4" fill="#7ba7d7" stroke="#3a6ea5" stroke-width=".8"/><rect x="57" y="11" width="7" height="1.2" fill="#3d3d3d"/><path d="M57 13.3 H64 L60.5 16.8Z" fill="#3d3d3d"/><rect x="1841" y="17" width="9" height="2" fill="#666"/><path d="M1873 15.5 V13 H1879.3 V18.7 H1877.3" fill="none" stroke="#9a9a9a" stroke-width="1.1"/><rect x="1870.5" y="16.8" width="6" height="5.6" fill="#fff" stroke="#666" stroke-width="1.1"/><rect x="1870" y="16.2" width="7" height="1.6" fill="#666"/><path d="M1899 11 L1908 20.3 M1908 11 L1899 20.3" stroke="#666" stroke-width="1.4"/><path d="M1880.5 43.4 L1883.7 39.4 L1886.9 43.4" fill="none" stroke="#666" stroke-width="1.7"/><circle cx="1906" cy="41" r="8" fill="#2b6cb0"/><path d="M747.2 43.2 L750.2 46.4 L755.6 39.6" fill="none" stroke="#333" stroke-width="2"/><path d="M37.5 77 H24.5 M30 70.5 L23.5 77 L30 83.5" fill="none" stroke="#444" stroke-width="2.6"/><path d="M70.5 77 H83.5 M78 70.5 L84.5 77 L78 83.5" fill="none" stroke="#9e9e9e" stroke-width="2.6"/><rect x="122.5" y="63.5" width="26.5" height="26" fill="#fff" stroke="#6e6e6e" stroke-width="1"/><rect x="122" y="63" width="27.5" height="6" fill="#3d78b5"/><rect x="129.2" y="69" width="1" height="20.5" fill="#8a8a8a"/><rect x="135.2" y="69" width="1" height="20.5" fill="#8a8a8a"/><rect x="141.0" y="69" width="1" height="20.5" fill="#8a8a8a"/><circle cx="144.5" cy="85.2" r="6.4" fill="#fff" stroke="#777" stroke-width="1"/><path d="M148.2 81.5 L146 86.7 L143 83.7Z" fill="#3d78b5"/><path d="M140.8 88.9 L143 83.7 L146 86.7Z" fill="#d9482b"/><path d="M178.7 72 V67 a2.6 2.6 0 0 1 2.6 -2.6 H188 M198 64.4 H204.6 a2.6 2.6 0 0 1 2.6 2.6 V72 M178.7 80 V85 a2.6 2.6 0 0 0 2.6 2.6 H188" fill="none" stroke="#555" stroke-width="1.5"/><circle cx="193" cy="75.7" r="6" fill="none" stroke="#555" stroke-width="1.5"/><circle cx="202" cy="86" r="7" fill="#48a07c"/><path d="M197.8 86 H206.2 M202 81.8 V90.2" stroke="#fff" stroke-width="2"/><path d="M235 64 H256 L260 68 V89 H235 Z" fill="#555"/><path d="M241 64 H253 V71.5 a1.8 1.8 0 0 1 -1.8 1.8 H242.8 a1.8 1.8 0 0 1 -1.8 -1.8Z" fill="#fff"/><rect x="247.3" y="67" width="3.4" height="4.8" fill="#555"/><path d="M237.8 79.8 a1.8 1.8 0 0 1 1.8 -1.8 H256 a1.8 1.8 0 0 1 1.8 1.8 V88.3 H237.8Z" fill="#fff"/><circle cx="257" cy="86" r="7" fill="#48a07c"/><path d="M252.8 86 H261.2 M257 81.8 V90.2" stroke="#fff" stroke-width="2"/><path d="M316.40 76.53 A13.4 13.4 0 1 1 313.56 68.05" fill="none" stroke="#4a9f7b" stroke-width="3.2"/><path d="M315.2 61 L319 64.3 V74.9 H309.4 L305.8 71.2 H313.4 L315.1 67.5Z" fill="#4a9f7b"/><path d="M349.84 87.43 A11.2 11.2 0 1 1 356.73 69.50" fill="none" stroke="#4a9f7b" stroke-width="3.3"/><path d="M358.2 65.2 H361 V73.8 H352 V71.2 H355.8 L358.2 68.3Z" fill="#4a9f7b"/><path d="M350.40 89.72 Q350.40 84.73 354.54 83.70 Q357.30 85.59 360.06 83.70 Q364.20 84.73 364.20 89.72 Q364.20 92.30 360.85 92.30 H353.75 Q350.40 92.30 350.40 89.72Z" fill="#2f6db5" stroke="#fff" stroke-width="1.2"/><circle cx="357.3" cy="80.5" r="4.4" fill="#2f6db5" stroke="#fff" stroke-width="1.2"/><path d="M385.7 82.6 V64.5 H402" fill="none" stroke="#a9a9a9" stroke-width="1"/><path d="M388.6 85.7 V67.5 H405" fill="none" stroke="#a9a9a9" stroke-width="1"/><rect x="391.8" y="70.5" width="16" height="18.3" fill="#fff" stroke="#4a9f7b" stroke-width="1"/><path d="M399.7 73 V83.5" stroke="#4a9f7b" stroke-width="2.8"/><path d="M394 79 L399.7 86.2 L405.4 79 L404 78 L399.7 82 L395.4 78Z" fill="#4a9f7b"/><circle cx="453" cy="77" r="14" fill="#b4b4b4"/><path d="M443.7 77.6 L450.2 84.2 L463.4 71.8" fill="none" stroke="#fff" stroke-width="4"/><circle cx="499" cy="77" r="14" fill="#b4b4b4"/><path d="M489.7 77.6 L496.2 84.2 L509.4 71.8" fill="none" stroke="#fff" stroke-width="4"/><path d="M500.60 89.70 Q500.60 85.06 504.68 84.10 Q507.40 85.86 510.12 84.10 Q514.20 85.06 514.20 89.70 Q514.20 92.10 511.08 92.10 H503.72 Q500.60 92.10 500.60 89.70Z" fill="#9c9c9c" stroke="#fff" stroke-width="1.2"/><circle cx="507.4" cy="80.6" r="4.4" fill="#9c9c9c" stroke="#fff" stroke-width="1.2"/><path d="M541 71.5 L541 86 H554 L558.5 81.7 L550 80.2 Q556 73.5 561.5 73.2 Q566.3 73.4 564 86 H569.3 Q573.5 69 562 67 Q553 66.5 546.3 76.3 Z" fill="#a9a9a9"/><path d="M587 71.5 L587 86 H600 L604.5 81.7 L596 80.2 Q602 73.5 607.5 73.2 Q612.3 73.4 610 86 H615.3 Q619.5 69 608 67 Q599 66.5 592.3 76.3 Z" fill="#a9a9a9"/><rect x="606.5" y="81.5" width="11.4" height="10.8" rx="1" fill="#fff" stroke="#a9a9a9" stroke-width="1.2"/><path d="M608.8 86.8 L611.3 89.8 L616 83.8" fill="none" stroke="#a9a9a9" stroke-width="1.5"/><path d="M646.6 71.8 L657.2 64.4 Q661 61.4 664.8 64.4 L675.4 71.8" fill="none" stroke="#6a6a6a" stroke-width="1.1"/><path d="M650 65 H671.8 V72.2 L665.9 79.6 H656.2 L650 72.2Z" fill="#e8ad52"/><rect x="652.1" y="67" width="17.8" height="1.1" fill="#fff"/><rect x="652.1" y="70" width="17.8" height="1.1" fill="#fff"/><rect x="655.1" y="73" width="10.8" height="1.1" fill="#fff"/><rect x="656.2" y="76" width="8.8" height="1.1" fill="#fff"/><path d="M646.6 71.8 V90.1 a1.4 1.4 0 0 0 1.4 1.4 H674 a1.4 1.4 0 0 0 1.4 -1.4 V71.8" fill="none" stroke="#6a6a6a" stroke-width="1.1"/><path d="M646.9 72 L656.4 80.6 H665.6 L675.1 72 M656.4 80.6 L647.2 91 M665.6 80.6 L674.8 91" fill="none" stroke="#6a6a6a" stroke-width="1.1"/><g transform="translate(700.3,92.6) rotate(-45)"><path d="M0 0 L7 -3 V3Z" fill="#2f6db5"/><rect x="8.1" y="-3.1" width="26.4" height="6.2" fill="#2f6db5"/><path d="M35.6 -3.1 H39.8 a3.1 3.1 0 0 1 0 6.2 H35.6Z" fill="#2f6db5"/></g><rect x="745.8" y="64" width="27.2" height="3.7" fill="#3d78b5"/><rect x="757" y="61" width="4.6" height="4" rx="1.5" fill="#3d78b5"/><rect x="748" y="69" width="23" height="24" fill="#707070"/><rect x="751.8" y="72.8" width="3.3" height="16.2" fill="#fff"/><rect x="757.8" y="72.8" width="3.3" height="16.2" fill="#fff"/><rect x="763.8" y="72.8" width="3.3" height="16.2" fill="#fff"/><use href="#clip" x="824" y="62" stroke="#2f6db5" stroke-width="2"/><path d="M911.5 62.4 H929.5 L935.3 68.2 V91 H911.5Z" fill="#fff" stroke="#b0b0b0" stroke-width="1"/><path d="M929.5 62.4 V68.2 H935.3" fill="none" stroke="#b0b0b0" stroke-width="1"/><g transform="translate(914,69.5) scale(.62)"><use href="#clip" stroke="#b0b0b0" stroke-width="2.6"/></g><path d="M925.8 87.8 Q933.2 77.6 940.6 87.8 Q933.2 97.8 925.8 87.8Z" fill="#b0b0b0" stroke="#fff" stroke-width="1"/><circle cx="933.2" cy="87.7" r="2.6" fill="none" stroke="#fff" stroke-width="1"/><use href="#clip" x="987" y="62" stroke="#ababab" stroke-width="2.4"/><path d="M1008.6 76 H1015 V84 H1019.3 L1011.8 93 L1004.4 84 H1008.6Z" fill="#ababab" stroke="#fff" stroke-width="1"/><use href="#clip" x="1051" y="62" stroke="#ababab" stroke-width="2.4"/><path d="M1068.2 75.2 H1078 L1082.8 80 V92.5 H1068.2Z" fill="#fff" stroke="#ababab" stroke-width="1.1"/><path d="M1078 75.2 V80 H1082.8" fill="none" stroke="#ababab" stroke-width="1"/><path d="M1067.2 74.2 H1078.4" stroke="#fff" stroke-width="1" fill="none"/><use href="#clip" x="1110" y="62" stroke="#ababab" stroke-width="2.4"/><circle cx="1135" cy="86" r="7.3" fill="#ababab" stroke="#fff" stroke-width="1"/><path d="M1131.7 82.7 L1138.3 89.3 M1138.3 82.7 L1131.7 89.3" stroke="#fff" stroke-width="2"/><path d="M1188.80 86.64 Q1188.80 77.82 1196.24 76.00 Q1201.20 79.34 1206.16 76.00 Q1213.60 77.82 1213.60 86.64 Q1213.60 91.20 1207.67 91.20 H1194.73 Q1188.80 91.20 1188.80 86.64Z" fill="#2f6db5" stroke="#fff" stroke-width="1.2"/><circle cx="1201.2" cy="69.3" r="8.0" fill="#2f6db5" stroke="#fff" stroke-width="1.2"/><circle cx="1211" cy="84.7" r="7.3" fill="#8a4fa3" stroke="#fff" stroke-width="1.2"/><rect x="1210" y="83.3" width="2.2" height="5.6" fill="#fff"/><circle cx="1211.1" cy="80.8" r="1.3" fill="#fff"/><path d="M1274.50 82.06 Q1274.50 75.22 1280.26 73.80 Q1284.10 76.40 1287.94 73.80 Q1293.70 75.22 1293.70 82.06 Q1293.70 85.60 1289.10 85.60 H1279.10 Q1274.50 85.60 1274.50 82.06Z" fill="#2f6db5" stroke="#fff" stroke-width="1.2"/><circle cx="1284.1" cy="68.7" r="6.0" fill="#2f6db5" stroke="#fff" stroke-width="1.2"/><path d="M1262.20 85.86 Q1262.20 79.02 1268.08 77.60 Q1272.00 80.20 1275.92 77.60 Q1281.80 79.02 1281.80 85.86 Q1281.80 89.40 1277.20 89.40 H1266.80 Q1262.20 89.40 1262.20 85.86Z" fill="#2f6db5" stroke="#fff" stroke-width="1.2"/><circle cx="1272" cy="72.5" r="5.9" fill="#2f6db5" stroke="#fff" stroke-width="1.2"/><rect x="1337.3" y="64.3" width="31.2" height="23.2" fill="#fff" stroke="#2f6db5" stroke-width="1"/><rect x="1337" y="64" width="31.8" height="5.6" fill="#2f6db5"/><path d="M1341 74.5 a3.6 3.6 0 0 1 3.6 -3.5 H1347 a3.6 3.6 0 0 1 3.6 3.5 a3.6 3.6 0 0 1 -2.6 3.4 V79.5 H1349.6 V81 H1348 V82.3 H1349.6 V83.6 H1348 V84.8 L1346 86.3 L1344.2 84.8 V77.9 A3.6 3.6 0 0 1 1341 74.5Z" fill="#e9ab4e"/><rect x="1344.9" y="72.6" width="1.9" height="1.9" fill="#fff"/><rect x="1353.7" y="74.8" width="11.3" height="1" fill="#9a9a9a"/><rect x="1353.7" y="78.0" width="11.3" height="1" fill="#9a9a9a"/><rect x="1353.7" y="81.2" width="11.3" height="1" fill="#9a9a9a"/><rect x="1424.8" y="65.5" width="27.5" height="26" fill="#fff" stroke="#ababab" stroke-width="1"/><rect x="1424.3" y="65" width="28.5" height="5.4" fill="#ababab"/><rect x="1430.7" y="62.6" width="3" height="5.6" fill="#fff" stroke="#ababab" stroke-width="1"/><rect x="1444.2" y="62.6" width="3" height="5.6" fill="#fff" stroke="#ababab" stroke-width="1"/><rect x="1427" y="77.2" width="23.2" height="1" fill="#b5b5b5"/><rect x="1427" y="81.7" width="23.2" height="1" fill="#b5b5b5"/><rect x="1427" y="86.2" width="23.2" height="1" fill="#b5b5b5"/><rect x="1432.3" y="72.7" width="17.9" height="1" fill="#b5b5b5"/><rect x="1427" y="77.2" width="1" height="13" fill="#b5b5b5"/><rect x="1427" y="90.2" width="23.2" height="1" fill="#b5b5b5"/><rect x="1432.3" y="72.7" width="1" height="18" fill="#b5b5b5"/><rect x="1438.2" y="72.7" width="1" height="18" fill="#b5b5b5"/><rect x="1444.2" y="72.7" width="1" height="18" fill="#b5b5b5"/><rect x="1449.6" y="72.7" width="1" height="18" fill="#b5b5b5"/><rect x="15" y="158.1" width="15" height="3.65" fill="#2f73b7"/><rect x="19" y="164.1" width="12" height="2.7" fill="#2f73b7"/><rect x="19" y="168.1" width="12" height="2.7" fill="#2f73b7"/><rect x="19" y="172.2" width="12" height="2.7" fill="#2f73b7"/><path d="M16.4 161.8 V173.5" fill="none" stroke="#444" stroke-width=".8"/><circle cx="16.5" cy="165.45" r="1.15" fill="#c5d8ea" stroke="#444" stroke-width=".8"/><path d="M17.7 164.35 L19 165.45 L17.7 166.54999999999998Z" fill="#444"/><circle cx="16.5" cy="169.45" r="1.15" fill="#c5d8ea" stroke="#444" stroke-width=".8"/><path d="M17.7 168.35 L19 169.45 L17.7 170.54999999999998Z" fill="#444"/><circle cx="16.5" cy="173.55" r="1.15" fill="#c5d8ea" stroke="#444" stroke-width=".8"/><path d="M17.7 172.45000000000002 L19 173.55 L17.7 174.65Z" fill="#444"/><rect x="48" y="158.1" width="3.9" height="3.6" fill="#555"/><rect x="54" y="158.1" width="12" height="3.6" fill="#828282"/><rect x="48" y="165.2" width="3.9" height="3.6" fill="#555"/><rect x="54" y="165.2" width="12" height="3.6" fill="#828282"/><rect x="48" y="172.25" width="3.9" height="3.6" fill="#555"/><rect x="54" y="172.25" width="12" height="3.6" fill="#828282"/><rect x="1693" y="160" width="16" height="2" fill="#2f73b7"/><rect x="1698" y="158" width="6" height="2.5" rx="1" fill="#2f73b7"/><rect x="1694.5" y="163.5" width="13" height="12" fill="#555"/><rect x="1696.7" y="165.5" width="1.7" height="8" fill="#fff"/><rect x="1700.2" y="165.5" width="1.7" height="8" fill="#fff"/><rect x="1703.7" y="165.5" width="1.7" height="8" fill="#fff"/><circle cx="1723.9" cy="168.3" r="4.8" fill="none" stroke="#666" stroke-width="1"/><path d="M1723 166.6 L1724.2 165.8 V171" fill="none" stroke="#666" stroke-width="1"/><use href="#doc" x="15" y="308"/><use href="#doc" x="15" y="370"/><rect x="13.6" y="420.2" width="17.8" height="2.6" rx=".6" fill="#555"/><rect x="18.6" y="418.3" width="7.8" height="3" rx="1.4" fill="#555"/><path d="M15.3 423.8 H29.7 V436.3 a1.4 1.4 0 0 1 -1.4 1.4 H16.9 a1.4 1.4 0 0 1 -1.4 -1.4Z" fill="#555"/><rect x="18.3" y="425.7" width="1.5" height="9.6" fill="#fff"/><rect x="21.8" y="425.7" width="1.5" height="9.6" fill="#fff"/><rect x="25.3" y="425.7" width="1.5" height="9.6" fill="#fff"/><path d="M23.5 486 H13 a1.3 1.3 0 0 1 -1.3 -1.3 V469 a1.3 1.3 0 0 1 1.3 -1.3 H20.3 L25 472.4 V475" fill="none" stroke="#555" stroke-width="1.5"/><path d="M20 467.9 V472.6 H24.8" fill="none" stroke="#555" stroke-width="1.2"/><circle cx="25.4" cy="479.8" r="3.8" fill="#fff" stroke="#555" stroke-width="1.7"/><path d="M28 482.9 L32.8 486.8" stroke="#555" stroke-width="1.8"/><use href="#doc" x="15" y="516"/><path d="M195.42 196.95 L195.42 200.45 L192.82 201.18 L192.81 201.21 L194.13 203.56 L191.66 206.03 L189.31 204.71 L189.28 204.72 L188.55 207.32 L185.05 207.32 L184.32 204.72 L184.29 204.71 L181.94 206.03 L179.47 203.56 L180.79 201.21 L180.78 201.18 L178.18 200.45 L178.18 196.95 L180.78 196.22 L180.79 196.19 L179.47 193.84 L181.94 191.37 L184.29 192.69 L184.32 192.68 L185.05 190.08 L188.55 190.08 L189.28 192.68 L189.31 192.69 L191.66 191.37 L194.13 193.84 L192.81 196.19 L192.82 196.22Z" fill="#7950c0"/><circle cx="186.8" cy="198.7" r="3.2" fill="#fff"/><circle cx="25.2" cy="245.7" r="5.2" fill="none" stroke="#666" stroke-width="1.2"/><path d="M21.4 249.6 L16 254.6" stroke="#666" stroke-width="1.3"/><path d="M17.17 280.66 A7.2 7.2 0 1 1 18.61 288.79" fill="none" stroke="#555" stroke-width="2.8"/><path d="M12 273.2 H14.9 V279.7 H19.5 V282.5 H12Z" fill="#555"/><path d="M14.9 276.5 L18.5 279.8 H14.9Z" fill="#555"/><path d="M48.75 1013.8 a4.3 4.3 0 0 1 2.3 7.9 V1023.4 H46.45 V1021.7 a4.3 4.3 0 0 1 2.3 -7.9Z" fill="#7950c0"/><rect x="46.7" y="1024" width="4.1" height="1" fill="#7950c0"/><rect x="47.4" y="1025.4" width="2.7" height=".9" fill="#7950c0"/><path d="M41.3 1018.6 H43.6 M53.9 1018.6 H56.2 M42.6 1013.8 L44.5 1015.3 M54.9 1013.8 L53 1015.3 M42.6 1023 L44.5 1021.7 M54.9 1023 L53 1021.7" stroke="#7950c0" stroke-width="1.1"/><path d="M216.3 602.9 L210.7 608.8 L216.3 614.5" fill="none" stroke="#fff" stroke-width="1.5" stroke-linecap="round" stroke-linejoin="round"/><use href="#lock" x="227" y="211.8"/><use href="#lock" x="282" y="211.8"/><use href="#lock" x="302" y="211.8"/><use href="#lock" x="322" y="211.8"/><use href="#minus" x="227" y="236.0"/><use href="#person" x="300" y="236"/><use href="#target" x="280" y="264.5"/><use href="#cal" x="301.0" y="264"/><use href="#eye" x="855.8" y="265.6"/><use href="#open" x="1656" y="265"/><use href="#target" x="280" y="292.5"/><use href="#cal" x="301.0" y="292"/><use href="#eye" x="855.8" y="293.6"/><use href="#open" x="1656" y="293"/><use href="#target" x="280" y="320.5"/><use href="#cal" x="301.0" y="320"/><use href="#eye" x="855.8" y="321.6"/><use href="#open" x="1656" y="321"/><use href="#target" x="280" y="348.5"/><use href="#cal" x="301.0" y="348"/><use href="#eye" x="855.8" y="349.6"/><use href="#open" x="1656" y="349"/><use href="#target" x="280" y="376.5"/><use href="#cal" x="301.0" y="376"/><use href="#eye" x="855.8" y="377.6"/><use href="#open" x="1656" y="377"/><use href="#target" x="280" y="404.5"/><use href="#cal" x="301.0" y="404"/><use href="#eye" x="855.8" y="405.6"/><use href="#open" x="1656" y="405"/><use href="#target" x="280" y="432.5"/><use href="#cal" x="301.0" y="432"/><use href="#open" x="1656" y="433"/><use href="#targets" x="280" y="460.5"/><use href="#cals" x="301.0" y="460"/><use href="#eyes" x="855.8" y="461.6"/><use href="#opens" x="1656" y="461"/><use href="#target" x="280" y="488.5"/><use href="#cal" x="301.0" y="488"/><use href="#eye" x="855.8" y="489.6"/><use href="#open" x="1656" y="489"/><use href="#minus" x="227" y="516.0"/><use href="#person" x="300" y="516"/><use href="#target" x="280" y="544.5"/><use href="#cal" x="301.0" y="544"/><use href="#open" x="1656" y="545"/><use href="#target" x="280" y="572.5"/><use href="#cal" x="301.0" y="572"/><use href="#eye" x="855.8" y="573.5999999999999"/><use href="#open" x="1656" y="573"/><use href="#target" x="280" y="600.5"/><use href="#cal" x="301.0" y="600"/><use href="#eye" x="855.8" y="601.5999999999999"/><use href="#open" x="1656" y="601"/><use href="#target" x="280" y="628.5"/><use href="#cal" x="301.0" y="628"/><use href="#eye" x="855.8" y="629.5999999999999"/><use href="#open" x="1656" y="629"/><use href="#target" x="280" y="656.5"/><use href="#cal" x="301.0" y="656"/><use href="#eye" x="855.8" y="657.5999999999999"/><use href="#open" x="1656" y="657"/><use href="#target" x="280" y="684.5"/><use href="#cal" x="301.0" y="684"/><use href="#eye" x="855.8" y="685.5999999999999"/><use href="#open" x="1656" y="685"/><use href="#target" x="280" y="712.5"/><use href="#cal" x="301.0" y="712"/><use href="#eye" x="855.8" y="713.5999999999999"/><use href="#open" x="1656" y="713"/><use href="#target" x="280" y="740.5"/><use href="#cal" x="301.0" y="740"/><use href="#eye" x="855.8" y="741.5999999999999"/><use href="#open" x="1656" y="741"/><use href="#target" x="280" y="768.5"/><use href="#cal" x="301.0" y="768"/><use href="#open" x="1656" y="769"/><use href="#target" x="280" y="796.5"/><use href="#cal" x="301.0" y="796"/><use href="#eye" x="855.8" y="797.5999999999999"/><use href="#open" x="1656" y="797"/><path d="M1876.8 204 L1871.5 208.7 L1876.8 213.4" fill="none" stroke="#fff" stroke-width="1.5"/><path d="M1886.2 194.4 h4 a2.6 2.6 0 0 1 5 0 h4 v5 h-13Z" fill="#fff"/><rect x="1882" y="195.8" width="21.8" height="24.2" rx="1" fill="#fff"/><circle cx="1892.7" cy="194" r=".9" fill="#5530a0"/><path d="M1886.2 199.9 H1899.2" stroke="#5530a0" stroke-width=".6"/><circle cx="1887.2" cy="206.4" r="1.9" fill="none" stroke="#7950c0" stroke-width="1.4"/><rect x="1892" y="204.20000000000002" width="8.8" height="1.2" fill="#7950c0"/><rect x="1892" y="207.3" width="8.8" height="1.2" fill="#7950c0"/><circle cx="1887.2" cy="214.2" r="1.9" fill="none" stroke="#7950c0" stroke-width="1.4"/><rect x="1892" y="212.0" width="8.8" height="1.2" fill="#7950c0"/><rect x="1892" y="215.1" width="8.8" height="1.2" fill="#7950c0"/></svg>
<div class="pc" style="left:170px;top:150px"><svg style="left:0;top:0" width="40" height="40" viewBox="0 0 40 40"><path d="M15.2 17.2 L20.3 11.6" stroke="#fff" stroke-width="2.6" fill="none"/><rect x="20" y="10" width="3.3" height="20.6" fill="#fff"/></svg></div>
<div class="pc" style="left:329.5px;top:147.5px">2</div>
<div class="pc" style="left:460px;top:149px">3</div>
<div class="pc" style="left:563px;top:148px">4</div>
<div class="pc" style="left:645px;top:148px">5</div>
<div class="pc" style="left:720px;top:148.5px">6</div>
<div class="pc" style="left:959px;top:150.5px">7</div>
<div class="pc" style="left:1259.7px;top:150.5px">8</div>
<div class="pc" style="left:1422px;top:150.5px">9</div>
</body></html>
